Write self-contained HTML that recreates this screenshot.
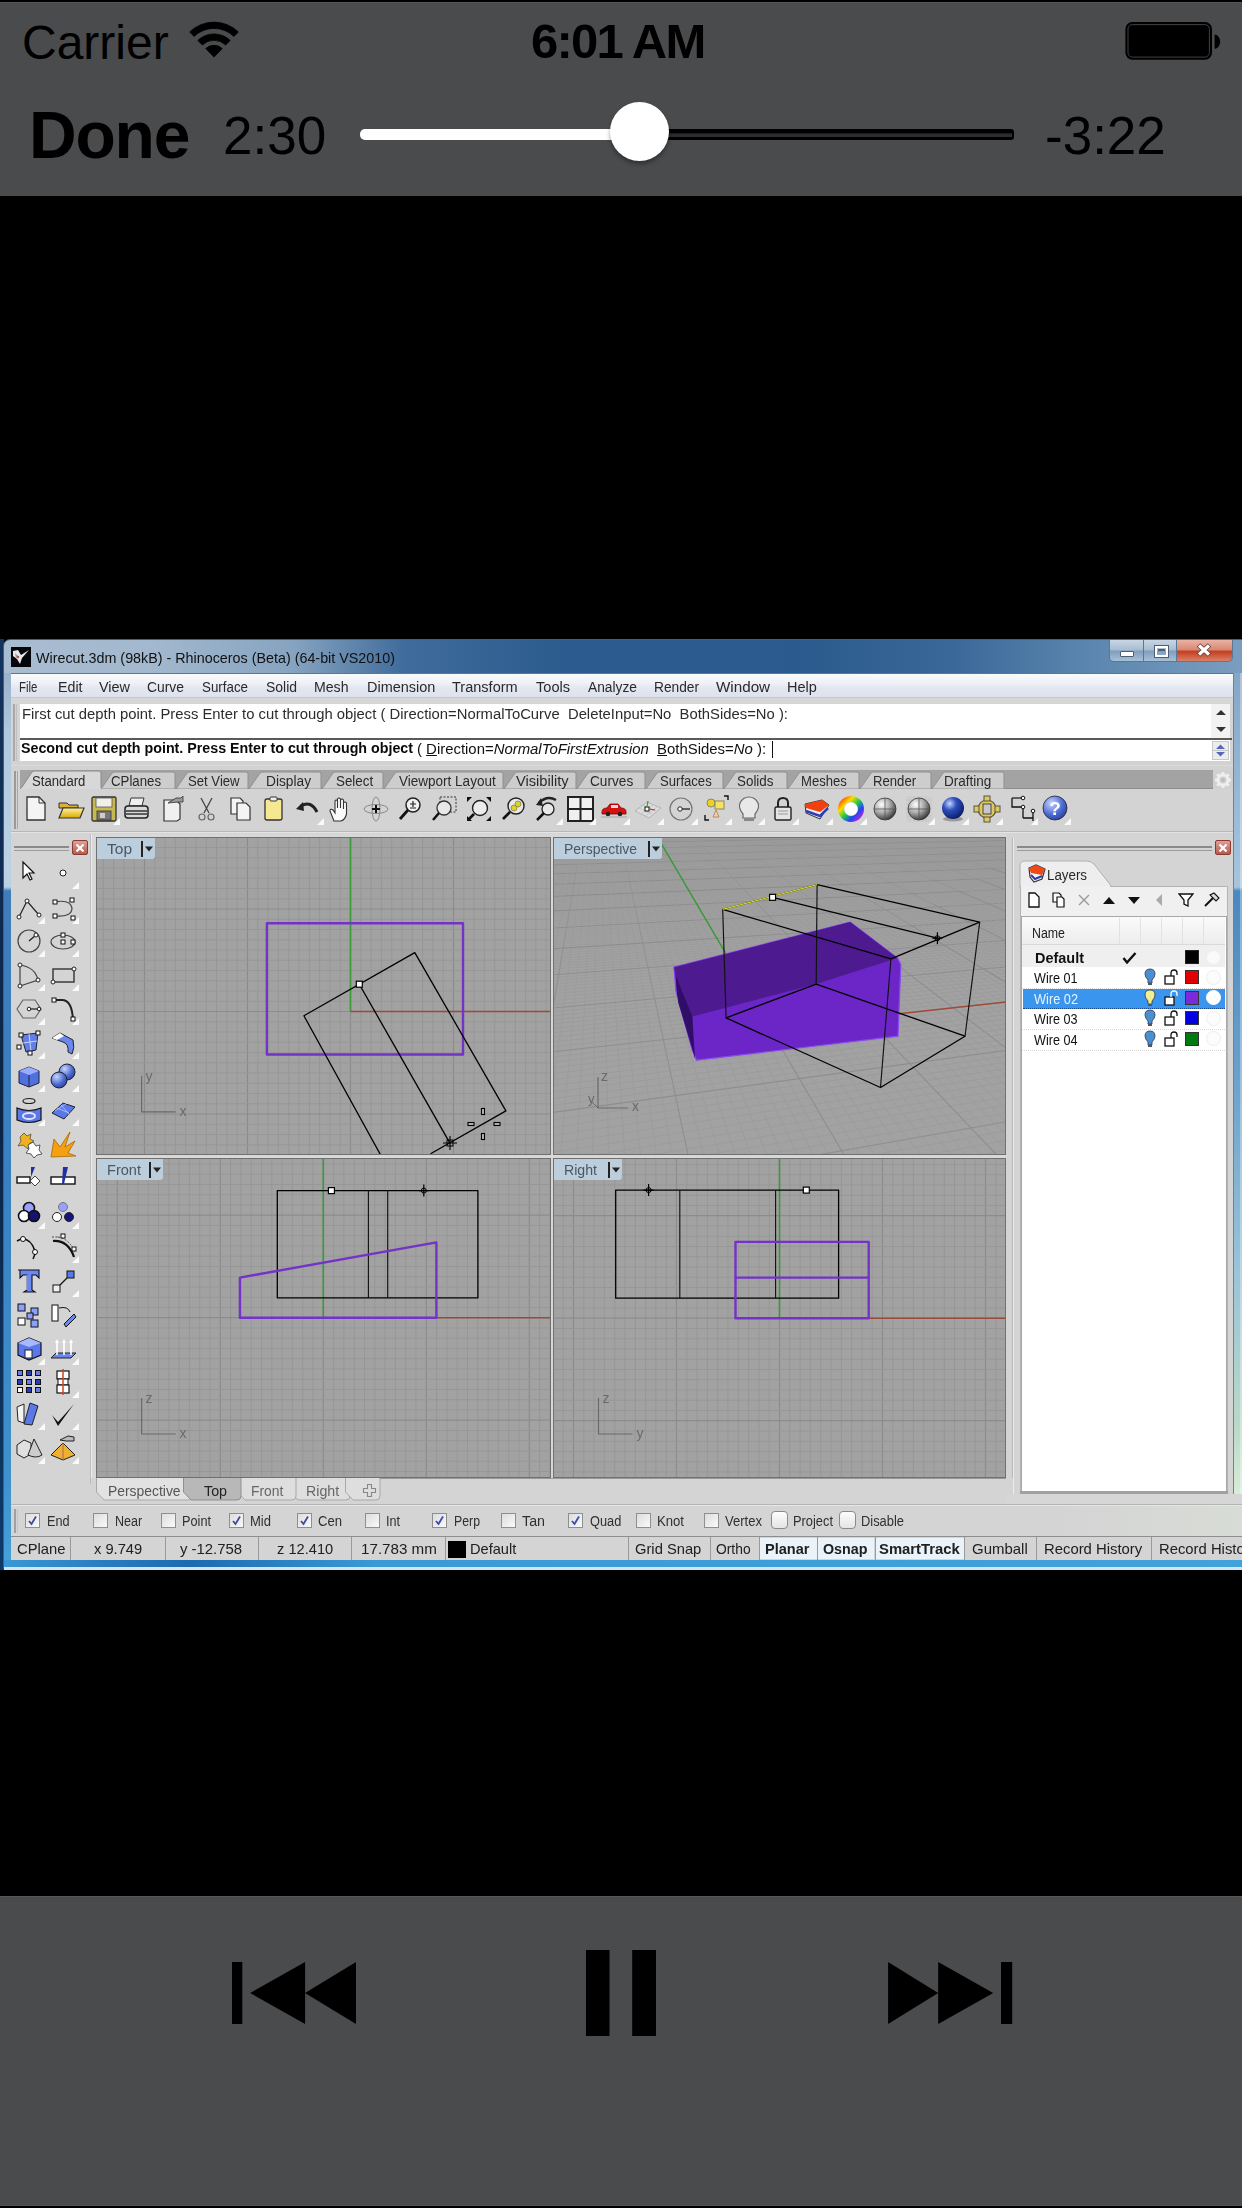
<!DOCTYPE html>
<html><head><meta charset="utf-8">
<style>
*{margin:0;padding:0;box-sizing:border-box}
html,body{width:1242px;height:2208px;overflow:hidden;background:#000;font-family:"Liberation Sans",sans-serif}
.a{position:absolute}
#top{position:absolute;left:0;top:2px;width:1242px;height:194px;background:#4a4b4d;border-top:1px solid #56575a}
#bot{position:absolute;left:0;top:1896px;width:1242px;height:310px;background:#4a4b4d;border-top:1px solid #56575a;border-bottom:1px solid #535456}
.ios{color:#000;white-space:nowrap;line-height:1}
#win{position:absolute;left:0;top:639px;width:1242px;height:931px;overflow:hidden}
.tt{font-size:15px;color:#111;white-space:nowrap;line-height:17px}
.mn{position:absolute;top:40px;font-size:14px;color:#111;white-space:nowrap;line-height:16px}
.t{white-space:nowrap}
</style></head><body>
<div id="top">
  <div class="a ios" style="left:22px;top:16px;font-size:48px">Carrier</div>
  <svg class="a" style="left:185px;top:15.3px" width="60" height="44" viewBox="0 0 60 44"><path d="M29 39.1 L20.80 30.61 A11.8 11.8 0 0 1 37.20 30.61 Z M12.88 22.41 A23.2 23.2 0 0 1 45.12 22.41 L40.67 27.02 A16.8 16.8 0 0 0 17.33 27.02 Z M4.69 13.92 A35 35 0 0 1 53.31 13.92 L48.94 18.45 A28.7 28.7 0 0 0 9.06 18.45 Z" fill="#000" stroke="#000" stroke-width="0.8" stroke-linejoin="round"/></svg>
  <div class="a ios" style="left:531px;top:14px;font-size:49px;font-weight:bold;letter-spacing:-1.8px">6:01 AM</div>
  <svg class="a" style="left:1124px;top:17px" width="100" height="42" viewBox="0 0 100 42">
    <rect x="1.4" y="2" width="86.6" height="37.7" rx="7" fill="#000"/>
    <rect x="4" y="4.6" width="81.4" height="32.5" rx="4.5" fill="none" stroke="#474747" stroke-width="0.9"/>
    <path d="M90.6 14.6 A5.6 7.15 0 0 1 90.6 28.9 Z" fill="#000"/>
  </svg>
  <div class="a ios" style="left:29px;top:99px;font-size:66px;font-weight:bold;letter-spacing:-1.2px">Done</div>
  <div class="a ios" style="left:223px;top:106px;font-size:53px">2:30</div>
  <div class="a" style="left:360px;top:126px;width:290px;height:11px;background:#fff;border-radius:5px"></div>
  <div class="a" style="left:630px;top:126px;width:384px;height:11px;background:#000;border-radius:0 3px 3px 0"></div>
  <div class="a" style="left:630px;top:129.5px;width:382px;height:4px;background:#2c2c2e;border-top:1px solid #1a1a1a"></div>
  <div class="a" style="left:610px;top:99px;width:59px;height:59px;border-radius:50%;background:#fff;box-shadow:0 3px 4px rgba(0,0,0,.35)"></div>
  <div class="a ios" style="left:1045px;top:106px;font-size:53px">-3:22</div>
</div>
<div id="bot">
  <svg class="a" style="left:0;top:-1px" width="1242" height="310" viewBox="0 1896 1242 310">
    <rect x="232" y="1962" width="10.3" height="62" fill="#000"/>
    <path d="M250.2 1993 L305.1 1962 L305.1 2024 Z M305 1993 L356 1962 L356 2024 Z" fill="#000"/>
    <rect x="586" y="1950" width="23.5" height="86" fill="#000"/>
    <rect x="632.2" y="1950" width="23.8" height="86" fill="#000"/>
    <path d="M888.1 1962 L938.2 1993 L888.1 2024 Z M938.2 1962 L993.2 1993 L938.2 2024 Z" fill="#000"/>
    <rect x="1001" y="1962" width="11.2" height="62" fill="#000"/>
  </svg>
</div>
<div class="a" style="left:0;top:0;width:1242px;height:2208px;filter:blur(0.3px)"><div class="a" style="left:0px;top:639px;width:4px;height:931px;background:linear-gradient(#14335e,#0b2448 50%,#0d3a6a);"></div>
<div class="a" style="left:3px;top:639px;width:1250px;height:930px;border-radius:7px 7px 0 0;background:linear-gradient(90deg,#a9bdd1 0,#a2b8ce 150px,#86a3c0 290px,#3f6c9b 400px,#2c5b8f 560px,#2b5a8e 800px,#3a6898 950px,#5a85ae 1080px,#7b9ec0 1242px);border:1px solid #40607e"></div>
<div class="a" style="left:4px;top:673px;width:8px;height:887px;background:linear-gradient(#9ab2ca 0,#b0c8de 60px,#bcd2e4 200px,#b8d0e4 214px,#3f7cba 218px,#3a80c0 500px,#3f90cc 800px,#46a0d8 887px);box-shadow:inset -1px 0 0 #7f9cb8"></div>
<div class="a" style="left:1233px;top:673px;width:10px;height:821px;background:linear-gradient(#86a6c6 0,#9cbcd8 150px,#a6c4dc 214px,#4a88c0 218px,#6aa0cc 400px,#9ac4d8 600px,#b8d8c8 750px,#d8ecd8 821px);box-shadow:inset -3px 0 0 rgba(255,255,255,.35)"></div>
<div class="a" style="left:1232px;top:673px;width:1.5px;height:821px;background:#6a849e;"></div>
<div class="a" style="left:4px;top:1560px;width:1240px;height:8px;background:linear-gradient(90deg,#3a98d4,#2a7cc0 8%,#1d6ab0 15%,#3a9ad6 30%,#42a2da 100%);"></div>
<div class="a" style="left:4px;top:1567px;width:1240px;height:3px;background:#cfe6f3;"></div>
<div class="a" style="left:0px;top:1570px;width:1242px;height:1px;background:#000;"></div>
<div class="a" style="left:11px;top:647px;width:20px;height:20px;background:#05050c;"></div>
<svg class="a" style="left:11px;top:647px;" width="20" height="20" viewBox="0 0 20 20"><path d="M2 4 L7 3 L10 8 L18 3 L11 11 L9 17 L6 12 L2 9 Z" fill="#e8e8e8"/><path d="M4 6 L7 9 L5 11 Z" fill="#999"/><circle cx="7" cy="10" r="1.2" fill="#c44"/></svg>
<div class="a t" style="left:36.0px;top:650.3px;font-size:15px;line-height:15px;color:#111;transform:scaleX(0.9548);transform-origin:0 0;">Wirecut.3dm (98kB) - Rhinoceros (Beta) (64-bit VS2010)</div>
<div class="a" style="left:1109px;top:640px;width:124px;height:22px;border:1px solid #5a7896;border-top:none;border-radius:0 0 5px 5px;overflow:hidden;background:#5a7896">
<div class="a" style="left:0;top:0;width:33px;height:21px;background:linear-gradient(#c8d6e4,#a8bcd0 48%,#7f9dbd 52%,#a6c0d8)"></div>
<div class="a" style="left:34px;top:0;width:32px;height:21px;background:linear-gradient(#c8d6e4,#a8bcd0 48%,#7f9dbd 52%,#a6c0d8)"></div>
<div class="a" style="left:67px;top:0;width:56px;height:21px;background:linear-gradient(#eab2a4,#d98a78 45%,#c4401f 55%,#d98068)"></div>
<div class="a" style="left:10px;top:11px;width:14px;height:6px;background:#fff;border:1px solid #4e5e70;border-radius:1px"></div>
<div class="a" style="left:45px;top:6px;width:13px;height:11px;border:2px solid #fff;box-shadow:0 0 0 1px #4e5e70;background:transparent"></div>
<div class="a" style="left:48px;top:9px;width:7px;height:2px;background:#4e5e70"></div>
</div>
<svg class="a" style="left:1196px;top:643px;" width="16" height="14" viewBox="0 0 16 14"><path d="M2.5 2 L13.5 12 M13.5 2 L2.5 12" stroke="#6a4038" stroke-width="5"/><path d="M3 2.5 L13 11.5 M13 2.5 L3 11.5" stroke="#fff" stroke-width="3.2"/></svg>
<div class="a" style="left:11px;top:673px;width:1222px;height:887px;background:#d4d4d4;"></div>
<div class="a" style="left:11px;top:673px;width:1222px;height:25px;background:linear-gradient(#f9fafc,#f0f2f7 35%,#e2e6f0 60%,#dde2ed);border-top:1px solid #5d7790"></div>
<div class="a" style="left:11px;top:697px;width:1222px;height:1px;background:#c4c8d0;"></div>
<div class="a t" style="left:19.1px;top:679.5px;font-size:14px;line-height:14px;color:#2a2a2a;transform:scaleX(0.8156);transform-origin:0 0;">File</div>
<div class="a t" style="left:58.0px;top:679.5px;font-size:14px;line-height:14px;color:#2a2a2a;transform:scaleX(1.0156);transform-origin:0 0;">Edit</div>
<div class="a t" style="left:98.5px;top:679.5px;font-size:14px;line-height:14px;color:#2a2a2a;transform:scaleX(1.0301);transform-origin:0 0;">View</div>
<div class="a t" style="left:146.5px;top:679.5px;font-size:14px;line-height:14px;color:#2a2a2a;transform:scaleX(0.9907);transform-origin:0 0;">Curve</div>
<div class="a t" style="left:201.5px;top:679.5px;font-size:14px;line-height:14px;color:#2a2a2a;transform:scaleX(0.9534);transform-origin:0 0;">Surface</div>
<div class="a t" style="left:265.5px;top:679.5px;font-size:14px;line-height:14px;color:#2a2a2a;transform:scaleX(0.9957);transform-origin:0 0;">Solid</div>
<div class="a t" style="left:314.0px;top:679.5px;font-size:14px;line-height:14px;color:#2a2a2a;transform:scaleX(1.0077);transform-origin:0 0;">Mesh</div>
<div class="a t" style="left:366.5px;top:679.5px;font-size:14px;line-height:14px;color:#2a2a2a;transform:scaleX(1.0342);transform-origin:0 0;">Dimension</div>
<div class="a t" style="left:452.3px;top:679.5px;font-size:14px;line-height:14px;color:#2a2a2a;transform:scaleX(1.0384);transform-origin:0 0;">Transform</div>
<div class="a t" style="left:536.1px;top:679.5px;font-size:14px;line-height:14px;color:#2a2a2a;transform:scaleX(1.0403);transform-origin:0 0;">Tools</div>
<div class="a t" style="left:587.5px;top:679.5px;font-size:14px;line-height:14px;color:#2a2a2a;transform:scaleX(0.9838);transform-origin:0 0;">Analyze</div>
<div class="a t" style="left:654.4px;top:679.5px;font-size:14px;line-height:14px;color:#2a2a2a;transform:scaleX(0.9822);transform-origin:0 0;">Render</div>
<div class="a t" style="left:715.8px;top:679.5px;font-size:14px;line-height:14px;color:#2a2a2a;transform:scaleX(1.0865);transform-origin:0 0;">Window</div>
<div class="a t" style="left:786.5px;top:679.5px;font-size:14px;line-height:14px;color:#2a2a2a;transform:scaleX(1.0349);transform-origin:0 0;">Help</div>
<div class="a" style="left:11px;top:698px;width:1222px;height:6px;background:#d6d6d6;"></div>
<div class="a" style="left:20px;top:704px;width:1210px;height:57px;background:#fff;"></div>
<div class="a" style="left:13px;top:704px;width:2px;height:57px;background:#a8a8a8;"></div>
<div class="a" style="left:16px;top:704px;width:1px;height:57px;background:#c0c0c0;"></div>
<div class="a" style="left:1211px;top:704px;width:19px;height:34px;background:#f2f2f2;"></div>
<svg class="a" style="left:1214px;top:707px;" width="14" height="28" viewBox="0 0 14 28"><path d="M2 8 L7 3 L12 8 Z" fill="#333"/><path d="M2 20 L12 20 L7 25 Z" fill="#333"/></svg>
<div class="a" style="left:20px;top:738px;width:1212px;height:1.5px;background:#5a5a5a;"></div>
<div class="a" style="left:1212px;top:741px;width:17px;height:19px;background:#ececec;border:1px solid #c8c8c8"></div>
<svg class="a" style="left:1212px;top:741px;" width="17" height="19" viewBox="0 0 17 19"><path d="M4 8 L8.5 3.5 L13 8 Z" fill="#5566bb"/><path d="M4 11 L13 11 L8.5 15.5 Z" fill="#5566bb"/><path d="M1 9.5 H16" stroke="#c8c8c8"/></svg>
<div class="a t" style="left:22.0px;top:706.7px;font-size:14px;line-height:14px;color:#2c2c2c;transform:scaleX(1.0590);transform-origin:0 0;">First cut depth point. Press Enter to cut through object ( Direction=NormalToCurve&nbsp; DeleteInput=No&nbsp; BothSides=No ):</div>
<div class="a t" style="left:21.0px;top:741.4px;font-size:14px;line-height:14px;color:#0a0a0a;font-weight:bold;transform:scaleX(1.0181);transform-origin:0 0;">Second cut depth point. Press Enter to cut through object</div>
<div class="a t" style="left:417px;top:741.5px;font-size:14px;line-height:14px;color:#111;transform:scaleX(1.0646);transform-origin:0 0">( <u>D</u>irection=<i>NormalToFirstExtrusion</i>&nbsp; <u>B</u>othSides=<i>No</i> ):</div>
<div class="a" style="left:772px;top:741px;width:1.3px;height:17px;background:#111;"></div>
<div class="a" style="left:11px;top:761px;width:1222px;height:9px;background:#d2d2d2;"></div>
<div class="a" style="left:11px;top:765px;width:1222px;height:1px;background:#dadada;"></div>
<div class="a" style="left:20px;top:770px;width:1193px;height:19px;background:#a3a3a3;"></div>
<div class="a" style="left:20px;top:788px;width:1213px;height:1.5px;background:#8c8c8c;"></div>
<div class="a" style="left:1213px;top:770px;width:20px;height:19px;background:#d0d0d0;"></div>
<svg class="a" style="left:1214px;top:771px;" width="18" height="18" viewBox="0 0 18 18"><g fill="none" stroke="#eee" stroke-width="3"><circle cx="9" cy="9" r="5"/></g><g stroke="#eee" stroke-width="3"><path d="M9 1V4M9 14V17M1 9H4M14 9H17M3.3 3.3L5.5 5.5M12.5 12.5L14.7 14.7M3.3 14.7L5.5 12.5M12.5 5.5L14.7 3.3"/></g><circle cx="9" cy="9" r="2" fill="#bbb"/></svg>
<svg class="a" style="left:20px;top:770px" width="85" height="21" viewBox="0 0 85 21"><path d="M0 21 L0 20 L12 2 Q13 1 15 1 L79 1 Q81 1 81 3 L81 21 Z" fill="#d8d8d8" stroke="#8a8a8a" stroke-width="1"/><rect x="1" y="18" width="80" height="3" fill="#d8d8d8"/></svg>
<svg class="a" style="left:101px;top:771px" width="77" height="18" viewBox="0 0 77 18"><path d="M0 18 L11 2 Q12 1 14 1 L72 1 Q74 1 74 3 L74 18 Z" fill="#cdcdcd" stroke="#8f8f8f" stroke-width="1"/></svg>
<svg class="a" style="left:176px;top:771px" width="75" height="18" viewBox="0 0 75 18"><path d="M0 18 L11 2 Q12 1 14 1 L70 1 Q72 1 72 3 L72 18 Z" fill="#cdcdcd" stroke="#8f8f8f" stroke-width="1"/></svg>
<svg class="a" style="left:249px;top:771px" width="75" height="18" viewBox="0 0 75 18"><path d="M0 18 L11 2 Q12 1 14 1 L70 1 Q72 1 72 3 L72 18 Z" fill="#cdcdcd" stroke="#8f8f8f" stroke-width="1"/></svg>
<svg class="a" style="left:322px;top:771px" width="64" height="18" viewBox="0 0 64 18"><path d="M0 18 L11 2 Q12 1 14 1 L59 1 Q61 1 61 3 L61 18 Z" fill="#cdcdcd" stroke="#8f8f8f" stroke-width="1"/></svg>
<svg class="a" style="left:384px;top:771px" width="122" height="18" viewBox="0 0 122 18"><path d="M0 18 L11 2 Q12 1 14 1 L117 1 Q119 1 119 3 L119 18 Z" fill="#cdcdcd" stroke="#8f8f8f" stroke-width="1"/></svg>
<svg class="a" style="left:504px;top:771px" width="75" height="18" viewBox="0 0 75 18"><path d="M0 18 L11 2 Q12 1 14 1 L70 1 Q72 1 72 3 L72 18 Z" fill="#cdcdcd" stroke="#8f8f8f" stroke-width="1"/></svg>
<svg class="a" style="left:577px;top:771px" width="71" height="18" viewBox="0 0 71 18"><path d="M0 18 L11 2 Q12 1 14 1 L66 1 Q68 1 68 3 L68 18 Z" fill="#cdcdcd" stroke="#8f8f8f" stroke-width="1"/></svg>
<svg class="a" style="left:646px;top:771px" width="80" height="18" viewBox="0 0 80 18"><path d="M0 18 L11 2 Q12 1 14 1 L75 1 Q77 1 77 3 L77 18 Z" fill="#cdcdcd" stroke="#8f8f8f" stroke-width="1"/></svg>
<svg class="a" style="left:724px;top:771px" width="66" height="18" viewBox="0 0 66 18"><path d="M0 18 L11 2 Q12 1 14 1 L61 1 Q63 1 63 3 L63 18 Z" fill="#cdcdcd" stroke="#8f8f8f" stroke-width="1"/></svg>
<svg class="a" style="left:788px;top:771px" width="74" height="18" viewBox="0 0 74 18"><path d="M0 18 L11 2 Q12 1 14 1 L69 1 Q71 1 71 3 L71 18 Z" fill="#cdcdcd" stroke="#8f8f8f" stroke-width="1"/></svg>
<svg class="a" style="left:860px;top:771px" width="74" height="18" viewBox="0 0 74 18"><path d="M0 18 L11 2 Q12 1 14 1 L69 1 Q71 1 71 3 L71 18 Z" fill="#cdcdcd" stroke="#8f8f8f" stroke-width="1"/></svg>
<svg class="a" style="left:932px;top:771px" width="75" height="18" viewBox="0 0 75 18"><path d="M0 18 L11 2 Q12 1 14 1 L70 1 Q72 1 72 3 L72 18 Z" fill="#cdcdcd" stroke="#8f8f8f" stroke-width="1"/></svg>
<div class="a t" style="left:32.3px;top:774.1px;font-size:14px;line-height:14px;color:#2a2a2a;transform:scaleX(0.9398);transform-origin:0 0;">Standard</div>
<div class="a t" style="left:111.1px;top:774.1px;font-size:14px;line-height:14px;color:#2a2a2a;transform:scaleX(0.9467);transform-origin:0 0;">CPlanes</div>
<div class="a t" style="left:187.9px;top:774.1px;font-size:14px;line-height:14px;color:#2a2a2a;transform:scaleX(0.9382);transform-origin:0 0;">Set View</div>
<div class="a t" style="left:265.5px;top:774.1px;font-size:14px;line-height:14px;color:#2a2a2a;transform:scaleX(0.9803);transform-origin:0 0;">Display</div>
<div class="a t" style="left:336.0px;top:774.1px;font-size:14px;line-height:14px;color:#2a2a2a;transform:scaleX(0.9560);transform-origin:0 0;">Select</div>
<div class="a t" style="left:398.5px;top:774.1px;font-size:14px;line-height:14px;color:#2a2a2a;transform:scaleX(0.9656);transform-origin:0 0;">Viewport Layout</div>
<div class="a t" style="left:515.5px;top:774.1px;font-size:14px;line-height:14px;color:#2a2a2a;transform:scaleX(1.0474);transform-origin:0 0;">Visibility</div>
<div class="a t" style="left:590.0px;top:774.1px;font-size:14px;line-height:14px;color:#2a2a2a;transform:scaleX(0.9742);transform-origin:0 0;">Curves</div>
<div class="a t" style="left:660.1px;top:774.1px;font-size:14px;line-height:14px;color:#2a2a2a;transform:scaleX(0.9358);transform-origin:0 0;">Surfaces</div>
<div class="a t" style="left:737.2px;top:774.1px;font-size:14px;line-height:14px;color:#2a2a2a;transform:scaleX(0.9572);transform-origin:0 0;">Solids</div>
<div class="a t" style="left:800.5px;top:774.1px;font-size:14px;line-height:14px;color:#2a2a2a;transform:scaleX(0.9343);transform-origin:0 0;">Meshes</div>
<div class="a t" style="left:873.2px;top:774.1px;font-size:14px;line-height:14px;color:#2a2a2a;transform:scaleX(0.9386);transform-origin:0 0;">Render</div>
<div class="a t" style="left:943.5px;top:774.1px;font-size:14px;line-height:14px;color:#2a2a2a;transform:scaleX(0.9669);transform-origin:0 0;">Drafting</div>
<div class="a" style="left:11px;top:789px;width:1222px;height:42px;background:#d3d3d3;"></div>
<div class="a" style="left:11px;top:831px;width:1222px;height:1px;background:#b8b8b8;"></div>
<div class="a" style="left:11px;top:832px;width:1222px;height:1px;background:#e4e4e4;"></div>
<div class="a" style="left:14px;top:771px;width:1.5px;height:58px;background:#9a9a9a;"></div>
<div class="a" style="left:16.5px;top:771px;width:1.5px;height:58px;background:#a8a8a8;"></div>
<svg class="a" style="left:0;top:0" width="0" height="0"><defs>
<linearGradient id="gy" x1="0" y1="0" x2="0" y2="1"><stop offset="0" stop-color="#fff3a0"/><stop offset="1" stop-color="#d9a800"/></linearGradient>
<radialGradient id="gs" cx="0.35" cy="0.3" r="0.75"><stop offset="0" stop-color="#fff"/><stop offset="0.5" stop-color="#aaa"/><stop offset="1" stop-color="#333"/></radialGradient>
<radialGradient id="bs" cx="0.35" cy="0.3" r="0.75"><stop offset="0" stop-color="#c8d8ff"/><stop offset="0.4" stop-color="#3050c0"/><stop offset="1" stop-color="#0a1a60"/></radialGradient>
<radialGradient id="hs" cx="0.35" cy="0.3" r="0.8"><stop offset="0" stop-color="#c8d4ff"/><stop offset="0.6" stop-color="#4a6ad0"/><stop offset="1" stop-color="#2a3a90"/></radialGradient>
<linearGradient id="bl" x1="0" y1="0" x2="1" y2="1"><stop offset="0" stop-color="#a8b8ff"/><stop offset="1" stop-color="#3a50c8"/></linearGradient>
</defs></svg>
<svg class="a" style="left:21.0px;top:794.0px;" width="30" height="30" viewBox="0 0 30 30"><path d="M6 3 H18 L24 9 V26 H6 Z" fill="#f4f4f4" stroke="#333" stroke-width="1.3"/><path d="M18 3 V9 H24" fill="none" stroke="#333" stroke-width="1"/></svg>
<svg class="a" style="left:55.5px;top:794.0px;" width="30" height="30" viewBox="0 0 30 30"><path d="M3 9 H11 L13 11 H22 V14 H3 Z" fill="#e0b030" stroke="#333" stroke-width="1"/><path d="M3 24 L7 14 H28 L24 24 Z" fill="url(#gy)" stroke="#333" stroke-width="1.2"/></svg>
<svg class="a" style="left:88.5px;top:794.0px;" width="30" height="30" viewBox="0 0 30 30"><rect x="3" y="3" width="24" height="24" rx="1.5" fill="#c8b850" stroke="#333" stroke-width="1.3"/><rect x="7" y="4" width="16" height="9" fill="#f0f0e8" stroke="#555" stroke-width="0.8"/><rect x="8" y="17" width="14" height="9" fill="#777" stroke="#333" stroke-width="0.8"/><rect x="11" y="19" width="5" height="5" fill="#ccc"/></svg>
<svg class="a" style="left:112.5px;top:818px;" width="7" height="7" viewBox="0 0 7 7"><path d="M7 0 L7 7 L0 7 Z" fill="#fafafa"/></svg>
<svg class="a" style="left:122.0px;top:794.0px;" width="30" height="30" viewBox="0 0 30 30"><path d="M9 4 H22 L20 12 H7 Z" fill="#f0f0f0" stroke="#333" stroke-width="1"/><rect x="3" y="12" width="23" height="12" rx="3" fill="#d8d8d8" stroke="#222" stroke-width="1.5"/><path d="M4 17 H25 M4 20 H25" stroke="#333" stroke-width="1.3"/></svg>
<svg class="a" style="left:159.0px;top:794.0px;" width="30" height="30" viewBox="0 0 30 30"><path d="M5 6 H17 L21 10 V25 L18 27 H5 Z" fill="#f0f0f0" stroke="#333" stroke-width="1.2"/><path d="M9 9 L17 4 L22 4 L24 2 V8 L20 8 Z" fill="#999" stroke="#333" stroke-width="0.8"/></svg>
<svg class="a" style="left:191.5px;top:794.0px;" width="30" height="30" viewBox="0 0 30 30"><path d="M9 4 L17 19 M20 4 L12 19" stroke="#444" stroke-width="1.3"/><circle cx="10" cy="23" r="3" fill="none" stroke="#666" stroke-width="1.2"/><circle cx="19" cy="23" r="3" fill="none" stroke="#666" stroke-width="1.2"/></svg>
<svg class="a" style="left:225.5px;top:794.0px;" width="30" height="30" viewBox="0 0 30 30"><path d="M5 4 H14 L17 7 V20 H5 Z" fill="#f4f4f4" stroke="#333" stroke-width="1.2"/><path d="M11 9 H20 L24 13 V26 H11 Z" fill="#f4f4f4" stroke="#333" stroke-width="1.2"/></svg>
<svg class="a" style="left:258.5px;top:794.0px;" width="30" height="30" viewBox="0 0 30 30"><rect x="6" y="5" width="17" height="21" rx="2" fill="#f6e890" stroke="#333" stroke-width="1.3"/><rect x="11" y="3" width="7" height="4" rx="1" fill="#eee" stroke="#333" stroke-width="1"/></svg>
<svg class="a" style="left:293.0px;top:794.0px;" width="30" height="30" viewBox="0 0 30 30"><path d="M24 18 Q18 6 8 12" fill="none" stroke="#222" stroke-width="3"/><path d="M3 15 L10 8 L11 17 Z" fill="#222"/></svg>
<svg class="a" style="left:317px;top:818px;" width="7" height="7" viewBox="0 0 7 7"><path d="M7 0 L7 7 L0 7 Z" fill="#fafafa"/></svg>
<svg class="a" style="left:325.0px;top:794.0px;" width="30" height="30" viewBox="0 0 30 30"><path d="M9 27 L5 17 Q5 14 8 16 L10 19 V7 Q11 5 12.5 7 V14 V5 Q14 3 15.5 5 V14 V6 Q17 4 18.5 6 V15 V9 Q20 7 21.5 9 V20 Q20 26 16 27 Z" fill="#fafafa" stroke="#333" stroke-width="1.1"/></svg>
<svg class="a" style="left:361.0px;top:794.0px;" width="30" height="30" viewBox="0 0 30 30"><ellipse cx="15" cy="15" rx="12" ry="4.5" fill="none" stroke="#888" stroke-width="1"/><ellipse cx="15" cy="15" rx="4" ry="12" fill="none" stroke="#888" stroke-width="1"/><path d="M15 11 V19 M11 15 H19" stroke="#111" stroke-width="2"/></svg>
<svg class="a" style="left:395.5px;top:794.0px;" width="30" height="30" viewBox="0 0 30 30"><circle cx="17" cy="11" r="7" fill="#f0f0f0" stroke="#222" stroke-width="1.5"/><path d="M12 16 L4 25" stroke="#111" stroke-width="2.8"/><path d="M14 10 H20 M17 7 V13 M14 14 H20" stroke="#222" stroke-width="1.2"/></svg>
<svg class="a" style="left:429.5px;top:794.0px;" width="30" height="30" viewBox="0 0 30 30"><rect x="10" y="3" width="16" height="15" fill="none" stroke="#333" stroke-width="1" stroke-dasharray="2 1.5"/><circle cx="14" cy="14" r="7" fill="#e8e8e8" stroke="#333" stroke-width="1.3"/><path d="M9 19 L3 26" stroke="#111" stroke-width="2.5"/></svg>
<svg class="a" style="left:463.5px;top:794.0px;" width="30" height="30" viewBox="0 0 30 30"><circle cx="16" cy="14" r="7.5" fill="#ececec" stroke="#222" stroke-width="1.4"/><path d="M10 20 L5 25" stroke="#111" stroke-width="2.6"/><path d="M3 3 H8 L3 8 Z M27 3 V8 L22 3 Z M3 27 V22 L8 27 Z M27 27 H22 L27 22 Z" fill="#111"/></svg>
<svg class="a" style="left:498.5px;top:794.0px;" width="30" height="30" viewBox="0 0 30 30"><circle cx="17" cy="12" r="8" fill="#e8e8e8" stroke="#222" stroke-width="1.4"/><circle cx="15" cy="14" r="3" fill="#e0d020" stroke="#666" stroke-width="0.6"/><circle cx="19" cy="10" r="3" fill="#e0d020" stroke="#666" stroke-width="0.6"/><path d="M11 18 L4 25" stroke="#111" stroke-width="2.6"/></svg>
<svg class="a" style="left:531.5px;top:794.0px;" width="30" height="30" viewBox="0 0 30 30"><path d="M7 9 Q15 1 24 6" fill="none" stroke="#222" stroke-width="2.5"/><path d="M4 11 L9 4 L11 12 Z" fill="#222"/><circle cx="16" cy="15" r="6" fill="#e8e8e8" stroke="#222" stroke-width="1.3"/><path d="M12 19 L5 26" stroke="#111" stroke-width="2.5"/></svg>
<svg class="a" style="left:555.5px;top:818px;" width="7" height="7" viewBox="0 0 7 7"><path d="M7 0 L7 7 L0 7 Z" fill="#fafafa"/></svg>
<svg class="a" style="left:565.0px;top:794.0px;" width="30" height="30" viewBox="0 0 30 30"><rect x="3" y="3" width="25" height="24" fill="#f0f0f0" stroke="#222" stroke-width="2"/><path d="M15.5 3 V27 M3 15 H28" stroke="#222" stroke-width="2"/></svg>
<svg class="a" style="left:589px;top:818px;" width="7" height="7" viewBox="0 0 7 7"><path d="M7 0 L7 7 L0 7 Z" fill="#fafafa"/></svg>
<svg class="a" style="left:598.5px;top:794.0px;" width="30" height="30" viewBox="0 0 30 30"><path d="M3 18 Q3 14 8 14 L11 10 H19 L22 14 Q27 14 27 18 V20 H3 Z" fill="#d81010" stroke="#800" stroke-width="0.8"/><rect x="12" y="11" width="7" height="3" fill="#ddd"/><circle cx="9" cy="20" r="2.3" fill="#222"/><circle cx="21" cy="20" r="2.3" fill="#222"/><path d="M2 23 H28" stroke="#999" stroke-width="0.8"/></svg>
<svg class="a" style="left:622.5px;top:818px;" width="7" height="7" viewBox="0 0 7 7"><path d="M7 0 L7 7 L0 7 Z" fill="#fafafa"/></svg>
<svg class="a" style="left:632.5px;top:794.0px;" width="30" height="30" viewBox="0 0 30 30"><path d="M2 17 L14 8 L28 14 L16 24 Z" fill="#ddd" stroke="#aaa" stroke-width="0.8"/><path d="M6 14 L19 20 M10 11 L23 17 M8 20 L20 11 M12 22 L24 13" stroke="#bbb" stroke-width="0.7"/><rect x="12" y="13" width="4" height="4" fill="#fff" stroke="#111"/><path d="M16 15 L22 16" stroke="#d22" stroke-width="1.2"/><path d="M14 13 L15 7" stroke="#2a2" stroke-width="1.2"/></svg>
<svg class="a" style="left:656.5px;top:818px;" width="7" height="7" viewBox="0 0 7 7"><path d="M7 0 L7 7 L0 7 Z" fill="#fafafa"/></svg>
<svg class="a" style="left:666.5px;top:794.0px;" width="30" height="30" viewBox="0 0 30 30"><circle cx="14" cy="15" r="11" fill="none" stroke="#777" stroke-width="1.2"/><circle cx="13" cy="15" r="2.2" fill="#fff" stroke="#222" stroke-width="1"/><path d="M15 15 H23" stroke="#222" stroke-width="1.3"/></svg>
<svg class="a" style="left:690.5px;top:818px;" width="7" height="7" viewBox="0 0 7 7"><path d="M7 0 L7 7 L0 7 Z" fill="#fafafa"/></svg>
<svg class="a" style="left:700.5px;top:794.0px;" width="30" height="30" viewBox="0 0 30 30"><circle cx="10" cy="9" r="4" fill="#f0d020" stroke="#886"/><rect x="14" y="7" width="9" height="8" fill="#f8e060" stroke="#886"/><path d="M12 23 L15 16 L18 23 Z" fill="#f4d0a0" stroke="#b86"/><path d="M4 21 V26 H8 M23 2 H27 V6" fill="none" stroke="#111" stroke-width="1.4"/></svg>
<svg class="a" style="left:724.5px;top:818px;" width="7" height="7" viewBox="0 0 7 7"><path d="M7 0 L7 7 L0 7 Z" fill="#fafafa"/></svg>
<svg class="a" style="left:734.0px;top:794.0px;" width="30" height="30" viewBox="0 0 30 30"><path d="M9 20 Q4 14 6 9 Q9 3 15 3 Q21 3 24 9 Q26 14 21 20 V24 H9 Z" fill="#e8e8e8" stroke="#666" stroke-width="1.2"/><rect x="10" y="24" width="10" height="3" fill="#888"/></svg>
<svg class="a" style="left:758px;top:818px;" width="7" height="7" viewBox="0 0 7 7"><path d="M7 0 L7 7 L0 7 Z" fill="#fafafa"/></svg>
<svg class="a" style="left:768.0px;top:794.0px;" width="30" height="30" viewBox="0 0 30 30"><path d="M10 13 V9 Q10 4 15 4 Q20 4 20 9 V13" fill="none" stroke="#222" stroke-width="2"/><rect x="7" y="13" width="16" height="13" rx="1.5" fill="#e4e4e4" stroke="#222" stroke-width="1.4"/><path d="M10 17 H20 M10 20 H20" stroke="#999"/></svg>
<svg class="a" style="left:792px;top:818px;" width="7" height="7" viewBox="0 0 7 7"><path d="M7 0 L7 7 L0 7 Z" fill="#fafafa"/></svg>
<svg class="a" style="left:802.0px;top:794.0px;" width="30" height="30" viewBox="0 0 30 30"><path d="M3 10 L20 6 L27 11 L18 25 L4 19 Z" fill="#f0f0f0" stroke="#333"/><path d="M3 10 L20 6 L27 11 L18 18 L4 14 Z" fill="#f04010"/><path d="M4 17 L18 22 L26 14" fill="none" stroke="#3040b0" stroke-width="2.5"/></svg>
<svg class="a" style="left:826px;top:818px;" width="7" height="7" viewBox="0 0 7 7"><path d="M7 0 L7 7 L0 7 Z" fill="#fafafa"/></svg>
<svg class="a" style="left:836.0px;top:794.0px;" width="30" height="30" viewBox="0 0 30 30"><circle cx="15" cy="15" r="10" fill="none" stroke="url(#cw)" stroke-width="6"/><defs><linearGradient id="cw" x1="0" y1="0" x2="1" y2="1"><stop offset="0" stop-color="#f40"/><stop offset="0.25" stop-color="#fd0"/><stop offset="0.5" stop-color="#2c4"/><stop offset="0.75" stop-color="#24f"/><stop offset="1" stop-color="#c2c"/></linearGradient></defs><circle cx="15" cy="15" r="6.5" fill="#fff"/></svg>
<svg class="a" style="left:860px;top:818px;" width="7" height="7" viewBox="0 0 7 7"><path d="M7 0 L7 7 L0 7 Z" fill="#fafafa"/></svg>
<svg class="a" style="left:870.0px;top:794.0px;" width="30" height="30" viewBox="0 0 30 30"><circle cx="15" cy="15" r="11" fill="url(#gs)" stroke="#333" stroke-width="0.8"/><path d="M4 15 H26 M15 4 V26" stroke="#555" stroke-width="0.8"/></svg>
<svg class="a" style="left:904.0px;top:794.0px;" width="30" height="30" viewBox="0 0 30 30"><rect x="2" y="2" width="26" height="26" fill="#cfcfcf"/><path d="M2 6H28M2 10H28M2 14H28M2 18H28M2 22H28M6 2V28M10 2V28M14 2V28M18 2V28M22 2V28" stroke="#bbb" stroke-width="0.5"/><circle cx="15" cy="15" r="11" fill="url(#gs)" stroke="#333" stroke-width="0.8"/><path d="M4 15 H26 M15 4 V26" stroke="#555" stroke-width="0.8"/></svg>
<svg class="a" style="left:928px;top:818px;" width="7" height="7" viewBox="0 0 7 7"><path d="M7 0 L7 7 L0 7 Z" fill="#fafafa"/></svg>
<svg class="a" style="left:938.0px;top:794.0px;" width="30" height="30" viewBox="0 0 30 30"><ellipse cx="15" cy="25" rx="10" ry="2.5" fill="#999"/><circle cx="15" cy="14" r="11" fill="url(#bs)"/></svg>
<svg class="a" style="left:962px;top:818px;" width="7" height="7" viewBox="0 0 7 7"><path d="M7 0 L7 7 L0 7 Z" fill="#fafafa"/></svg>
<svg class="a" style="left:972.0px;top:794.0px;" width="30" height="30" viewBox="0 0 30 30"><g transform="translate(15,15)"><circle r="9" fill="#e0c860" stroke="#554" stroke-width="1.2"/><g fill="#e0c860" stroke="#554" stroke-width="1"><rect x="-3" y="-13" width="6" height="5"/><rect x="-3" y="8" width="6" height="5"/><rect x="-13" y="-3" width="5" height="6"/><rect x="8" y="-3" width="5" height="6"/></g><rect x="-4" y="-5" width="8" height="10" fill="#c8c8c8" stroke="#444"/></g></svg>
<svg class="a" style="left:996px;top:818px;" width="7" height="7" viewBox="0 0 7 7"><path d="M7 0 L7 7 L0 7 Z" fill="#fafafa"/></svg>
<svg class="a" style="left:1006.5px;top:794.0px;" width="30" height="30" viewBox="0 0 30 30"><path d="M5 4 V13 H16 V24 M16 24 H26 M26 17 V27" fill="none" stroke="#111" stroke-width="1.3"/><circle cx="16" cy="4" r="1.8" fill="#fff" stroke="#111"/><circle cx="16" cy="13" r="1.8" fill="#fff" stroke="#111"/><circle cx="26" cy="17" r="1.8" fill="#fff" stroke="#111"/><path d="M5 4 H15" stroke="#111" stroke-width="1.2"/></svg>
<svg class="a" style="left:1030.5px;top:818px;" width="7" height="7" viewBox="0 0 7 7"><path d="M7 0 L7 7 L0 7 Z" fill="#fafafa"/></svg>
<svg class="a" style="left:1040.0px;top:794.0px;" width="30" height="30" viewBox="0 0 30 30"><circle cx="15" cy="14" r="12" fill="url(#hs)" stroke="#223" stroke-width="0.8"/><text x="15" y="21" text-anchor="middle" font-family="Liberation Sans" font-weight="bold" font-size="19" fill="#fff">?</text></svg>
<svg class="a" style="left:1064px;top:818px;" width="7" height="7" viewBox="0 0 7 7"><path d="M7 0 L7 7 L0 7 Z" fill="#fafafa"/></svg>
<div class="a" style="left:91px;top:834px;width:922px;height:650px;background:#d8d8d8;"></div>
<svg class="a" style="left:96px;top:837px" width="455" height="318" viewBox="0 0 455 318"><rect width="455" height="318" fill="#a2a2a2"/><path d="M7.3 0V318" stroke="#979797" stroke-width="1"/><path d="M17.6 0V318" stroke="#979797" stroke-width="1"/><path d="M27.9 0V318" stroke="#979797" stroke-width="1"/><path d="M38.2 0V318" stroke="#979797" stroke-width="1"/><path d="M48.5 0V318" stroke="#8c8c8c" stroke-width="1.2"/><path d="M58.8 0V318" stroke="#979797" stroke-width="1"/><path d="M69.1 0V318" stroke="#979797" stroke-width="1"/><path d="M79.4 0V318" stroke="#979797" stroke-width="1"/><path d="M89.7 0V318" stroke="#979797" stroke-width="1"/><path d="M100.0 0V318" stroke="#979797" stroke-width="1"/><path d="M110.3 0V318" stroke="#979797" stroke-width="1"/><path d="M120.6 0V318" stroke="#979797" stroke-width="1"/><path d="M130.9 0V318" stroke="#979797" stroke-width="1"/><path d="M141.2 0V318" stroke="#979797" stroke-width="1"/><path d="M151.5 0V318" stroke="#8c8c8c" stroke-width="1.2"/><path d="M161.8 0V318" stroke="#979797" stroke-width="1"/><path d="M172.1 0V318" stroke="#979797" stroke-width="1"/><path d="M182.4 0V318" stroke="#979797" stroke-width="1"/><path d="M192.7 0V318" stroke="#979797" stroke-width="1"/><path d="M203.0 0V318" stroke="#979797" stroke-width="1"/><path d="M213.3 0V318" stroke="#979797" stroke-width="1"/><path d="M223.6 0V318" stroke="#979797" stroke-width="1"/><path d="M233.9 0V318" stroke="#979797" stroke-width="1"/><path d="M244.2 0V318" stroke="#979797" stroke-width="1"/><path d="M254.5 0V318" stroke="#8c8c8c" stroke-width="1.2"/><path d="M264.8 0V318" stroke="#979797" stroke-width="1"/><path d="M275.1 0V318" stroke="#979797" stroke-width="1"/><path d="M285.4 0V318" stroke="#979797" stroke-width="1"/><path d="M295.7 0V318" stroke="#979797" stroke-width="1"/><path d="M306.0 0V318" stroke="#979797" stroke-width="1"/><path d="M316.3 0V318" stroke="#979797" stroke-width="1"/><path d="M326.6 0V318" stroke="#979797" stroke-width="1"/><path d="M336.9 0V318" stroke="#979797" stroke-width="1"/><path d="M347.2 0V318" stroke="#979797" stroke-width="1"/><path d="M357.5 0V318" stroke="#8c8c8c" stroke-width="1.2"/><path d="M367.8 0V318" stroke="#979797" stroke-width="1"/><path d="M378.1 0V318" stroke="#979797" stroke-width="1"/><path d="M388.4 0V318" stroke="#979797" stroke-width="1"/><path d="M398.7 0V318" stroke="#979797" stroke-width="1"/><path d="M409.0 0V318" stroke="#979797" stroke-width="1"/><path d="M419.3 0V318" stroke="#979797" stroke-width="1"/><path d="M429.6 0V318" stroke="#979797" stroke-width="1"/><path d="M439.9 0V318" stroke="#979797" stroke-width="1"/><path d="M450.2 0V318" stroke="#979797" stroke-width="1"/><path d="M0 0.2H455" stroke="#979797" stroke-width="1"/><path d="M0 10.5H455" stroke="#979797" stroke-width="1"/><path d="M0 20.8H455" stroke="#979797" stroke-width="1"/><path d="M0 31.0H455" stroke="#979797" stroke-width="1"/><path d="M0 41.2H455" stroke="#979797" stroke-width="1"/><path d="M0 51.5H455" stroke="#979797" stroke-width="1"/><path d="M0 61.8H455" stroke="#979797" stroke-width="1"/><path d="M0 72.0H455" stroke="#8c8c8c" stroke-width="1.2"/><path d="M0 82.2H455" stroke="#979797" stroke-width="1"/><path d="M0 92.5H455" stroke="#979797" stroke-width="1"/><path d="M0 102.8H455" stroke="#979797" stroke-width="1"/><path d="M0 113.0H455" stroke="#979797" stroke-width="1"/><path d="M0 123.2H455" stroke="#979797" stroke-width="1"/><path d="M0 133.5H455" stroke="#979797" stroke-width="1"/><path d="M0 143.8H455" stroke="#979797" stroke-width="1"/><path d="M0 154.0H455" stroke="#979797" stroke-width="1"/><path d="M0 164.2H455" stroke="#979797" stroke-width="1"/><path d="M0 174.5H455" stroke="#8c8c8c" stroke-width="1.2"/><path d="M0 184.8H455" stroke="#979797" stroke-width="1"/><path d="M0 195.0H455" stroke="#979797" stroke-width="1"/><path d="M0 205.2H455" stroke="#979797" stroke-width="1"/><path d="M0 215.5H455" stroke="#979797" stroke-width="1"/><path d="M0 225.8H455" stroke="#979797" stroke-width="1"/><path d="M0 236.0H455" stroke="#979797" stroke-width="1"/><path d="M0 246.2H455" stroke="#979797" stroke-width="1"/><path d="M0 256.5H455" stroke="#979797" stroke-width="1"/><path d="M0 266.8H455" stroke="#979797" stroke-width="1"/><path d="M0 277.0H455" stroke="#8c8c8c" stroke-width="1.2"/><path d="M0 287.2H455" stroke="#979797" stroke-width="1"/><path d="M0 297.5H455" stroke="#979797" stroke-width="1"/><path d="M0 307.8H455" stroke="#979797" stroke-width="1"/><path d="M0 318.0H455" stroke="#979797" stroke-width="1"/><g transform="translate(-96,-837)"><path d="M350.5 837V1011.5" stroke="#3a9a3a" stroke-width="1.6"/><path d="M350.5 1011.5H551" stroke="#9a4a3a" stroke-width="1.6"/><path d="M266.9 923.3 L463.0 923.3 L463.0 1054.5 L266.9 1054.5 Z" fill="none" stroke="#7432c8" stroke-width="2.4" stroke-linejoin="round"/><path d="M382.3 1158.0 L303.9 1015.8 L414.8 952.6 L505.9 1110.9 L430.6 1153.7" fill="none" stroke="#000" stroke-width="1.3" stroke-linejoin="round"/><path d="M359.3 984.2 L449.5 1142.4" fill="none" stroke="#000" stroke-width="1.3" stroke-linejoin="round"/><rect x="356.3" y="981.2" width="6" height="6" fill="#fff" stroke="#000" stroke-width="1.2"/><path d="M443 1143H457M450 1136V1150" stroke="#000" stroke-width="1.1"/><rect x="447" y="1140" width="6" height="6" fill="none" stroke="#000" stroke-width="1"/><g fill="#b8b8b8" stroke="#000" stroke-width="1.1"><rect x="481.5" y="1108.5" width="3" height="6"/><rect x="481.5" y="1133.5" width="3" height="6"/><rect x="468" y="1122.5" width="6" height="3"/><rect x="494" y="1122.5" width="6" height="3"/></g><path d="M141.6 1075.8V1111.8H175.6" fill="none" stroke="#6a6a6a" stroke-width="1.2"/><text x="145.6" y="1080.8" font-family="Liberation Sans" font-size="14" fill="#6a6a6a">y</text><text x="179.6" y="1115.8" font-family="Liberation Sans" font-size="14" fill="#6a6a6a">x</text></g><rect x="0.5" y="0.5" width="454" height="317" fill="none" stroke="#707070" stroke-width="1"/></svg>
<div class="a" style="left:97px;top:838px;width:58px;height:21px;background:#bccddb;border-radius:0 0 3px 0"></div>
<div class="a t" style="left:107.0px;top:841.3px;font-size:15px;line-height:15px;color:#4a5866;transform:scaleX(1.0337);transform-origin:0 0;">Top</div>
<div class="a" style="left:141px;top:841px;width:1.5px;height:16px;background:#222"></div>
<svg class="a" style="left:144px;top:845px;" width="10" height="8" viewBox="0 0 10 8"><path d="M1 1.5H9L5 6.5Z" fill="#222"/></svg>
<svg class="a" style="left:96px;top:1158px" width="455" height="320" viewBox="0 0 455 320"><rect width="455" height="320" fill="#a2a2a2"/><path d="M0.7 0V320" stroke="#979797" stroke-width="1"/><path d="M11.0 0V320" stroke="#979797" stroke-width="1"/><path d="M21.3 0V320" stroke="#8c8c8c" stroke-width="1.2"/><path d="M31.6 0V320" stroke="#979797" stroke-width="1"/><path d="M41.9 0V320" stroke="#979797" stroke-width="1"/><path d="M52.2 0V320" stroke="#979797" stroke-width="1"/><path d="M62.5 0V320" stroke="#979797" stroke-width="1"/><path d="M72.8 0V320" stroke="#979797" stroke-width="1"/><path d="M83.1 0V320" stroke="#979797" stroke-width="1"/><path d="M93.4 0V320" stroke="#979797" stroke-width="1"/><path d="M103.7 0V320" stroke="#979797" stroke-width="1"/><path d="M114.0 0V320" stroke="#979797" stroke-width="1"/><path d="M124.3 0V320" stroke="#8c8c8c" stroke-width="1.2"/><path d="M134.6 0V320" stroke="#979797" stroke-width="1"/><path d="M144.9 0V320" stroke="#979797" stroke-width="1"/><path d="M155.2 0V320" stroke="#979797" stroke-width="1"/><path d="M165.5 0V320" stroke="#979797" stroke-width="1"/><path d="M175.8 0V320" stroke="#979797" stroke-width="1"/><path d="M186.1 0V320" stroke="#979797" stroke-width="1"/><path d="M196.4 0V320" stroke="#979797" stroke-width="1"/><path d="M206.7 0V320" stroke="#979797" stroke-width="1"/><path d="M217.0 0V320" stroke="#979797" stroke-width="1"/><path d="M227.3 0V320" stroke="#8c8c8c" stroke-width="1.2"/><path d="M237.6 0V320" stroke="#979797" stroke-width="1"/><path d="M247.9 0V320" stroke="#979797" stroke-width="1"/><path d="M258.2 0V320" stroke="#979797" stroke-width="1"/><path d="M268.5 0V320" stroke="#979797" stroke-width="1"/><path d="M278.8 0V320" stroke="#979797" stroke-width="1"/><path d="M289.1 0V320" stroke="#979797" stroke-width="1"/><path d="M299.4 0V320" stroke="#979797" stroke-width="1"/><path d="M309.7 0V320" stroke="#979797" stroke-width="1"/><path d="M320.0 0V320" stroke="#979797" stroke-width="1"/><path d="M330.3 0V320" stroke="#8c8c8c" stroke-width="1.2"/><path d="M340.6 0V320" stroke="#979797" stroke-width="1"/><path d="M350.9 0V320" stroke="#979797" stroke-width="1"/><path d="M361.2 0V320" stroke="#979797" stroke-width="1"/><path d="M371.5 0V320" stroke="#979797" stroke-width="1"/><path d="M381.8 0V320" stroke="#979797" stroke-width="1"/><path d="M392.1 0V320" stroke="#979797" stroke-width="1"/><path d="M402.4 0V320" stroke="#979797" stroke-width="1"/><path d="M412.7 0V320" stroke="#979797" stroke-width="1"/><path d="M423.0 0V320" stroke="#979797" stroke-width="1"/><path d="M433.3 0V320" stroke="#8c8c8c" stroke-width="1.2"/><path d="M443.6 0V320" stroke="#979797" stroke-width="1"/><path d="M453.9 0V320" stroke="#979797" stroke-width="1"/><path d="M0 6.0H455" stroke="#979797" stroke-width="1"/><path d="M0 16.2H455" stroke="#979797" stroke-width="1"/><path d="M0 26.5H455" stroke="#979797" stroke-width="1"/><path d="M0 36.7H455" stroke="#979797" stroke-width="1"/><path d="M0 47.0H455" stroke="#979797" stroke-width="1"/><path d="M0 57.2H455" stroke="#8c8c8c" stroke-width="1.2"/><path d="M0 67.5H455" stroke="#979797" stroke-width="1"/><path d="M0 77.7H455" stroke="#979797" stroke-width="1"/><path d="M0 88.0H455" stroke="#979797" stroke-width="1"/><path d="M0 98.2H455" stroke="#979797" stroke-width="1"/><path d="M0 108.5H455" stroke="#979797" stroke-width="1"/><path d="M0 118.7H455" stroke="#979797" stroke-width="1"/><path d="M0 129.0H455" stroke="#979797" stroke-width="1"/><path d="M0 139.2H455" stroke="#979797" stroke-width="1"/><path d="M0 149.5H455" stroke="#979797" stroke-width="1"/><path d="M0 159.7H455" stroke="#8c8c8c" stroke-width="1.2"/><path d="M0 170.0H455" stroke="#979797" stroke-width="1"/><path d="M0 180.2H455" stroke="#979797" stroke-width="1"/><path d="M0 190.5H455" stroke="#979797" stroke-width="1"/><path d="M0 200.7H455" stroke="#979797" stroke-width="1"/><path d="M0 211.0H455" stroke="#979797" stroke-width="1"/><path d="M0 221.2H455" stroke="#979797" stroke-width="1"/><path d="M0 231.5H455" stroke="#979797" stroke-width="1"/><path d="M0 241.7H455" stroke="#979797" stroke-width="1"/><path d="M0 252.0H455" stroke="#979797" stroke-width="1"/><path d="M0 262.2H455" stroke="#8c8c8c" stroke-width="1.2"/><path d="M0 272.5H455" stroke="#979797" stroke-width="1"/><path d="M0 282.7H455" stroke="#979797" stroke-width="1"/><path d="M0 293.0H455" stroke="#979797" stroke-width="1"/><path d="M0 303.2H455" stroke="#979797" stroke-width="1"/><path d="M0 313.5H455" stroke="#979797" stroke-width="1"/><g transform="translate(-96,-1158)"><path d="M323.3 1158V1317.7" stroke="#3a9a3a" stroke-width="1.6"/><path d="M323.3 1317.7H551" stroke="#9a4a3a" stroke-width="1.6"/><path d="M277.3 1190.6 L477.9 1190.6 L477.9 1297.9 L277.3 1297.9 Z" fill="none" stroke="#000" stroke-width="1.3" stroke-linejoin="round"/><path d="M368.4 1190.6 L368.4 1297.9" fill="none" stroke="#111" stroke-width="1.15" stroke-linejoin="round"/><path d="M387.7 1190.6 L387.7 1297.9" fill="none" stroke="#111" stroke-width="1.15" stroke-linejoin="round"/><path d="M239.9 1317.7 L239.9 1277.6 L436.4 1242.4 L436.4 1317.7 Z" fill="none" stroke="#7432c8" stroke-width="2.4" stroke-linejoin="round"/><rect x="328.4" y="1187.6" width="6" height="6" fill="#fff" stroke="#000" stroke-width="1.2"/><path d="M418.8 1190.6H428.8M423.8 1184.6V1196.6" stroke="#000" stroke-width="1.2"/><circle cx="423.8" cy="1190.6" r="2.5" fill="none" stroke="#000" stroke-width="1"/><path d="M141.6 1398V1434H175.6" fill="none" stroke="#6a6a6a" stroke-width="1.2"/><text x="145.6" y="1403" font-family="Liberation Sans" font-size="14" fill="#6a6a6a">z</text><text x="179.6" y="1438" font-family="Liberation Sans" font-size="14" fill="#6a6a6a">x</text></g><rect x="0.5" y="0.5" width="454" height="319" fill="none" stroke="#707070" stroke-width="1"/></svg>
<div class="a" style="left:97px;top:1159px;width:66px;height:21px;background:#bccddb;border-radius:0 0 3px 0"></div>
<div class="a t" style="left:107.0px;top:1162.3px;font-size:15px;line-height:15px;color:#4a5866;transform:scaleX(0.9711);transform-origin:0 0;">Front</div>
<div class="a" style="left:149px;top:1162px;width:1.5px;height:16px;background:#222"></div>
<svg class="a" style="left:152px;top:1166px;" width="10" height="8" viewBox="0 0 10 8"><path d="M1 1.5H9L5 6.5Z" fill="#222"/></svg>
<svg class="a" style="left:553px;top:1158px" width="453" height="320" viewBox="0 0 453 320"><rect width="453" height="320" fill="#a2a2a2"/><path d="M10.2 0V320" stroke="#979797" stroke-width="1"/><path d="M20.5 0V320" stroke="#8c8c8c" stroke-width="1.2"/><path d="M30.8 0V320" stroke="#979797" stroke-width="1"/><path d="M41.1 0V320" stroke="#979797" stroke-width="1"/><path d="M51.4 0V320" stroke="#979797" stroke-width="1"/><path d="M61.7 0V320" stroke="#979797" stroke-width="1"/><path d="M72.0 0V320" stroke="#979797" stroke-width="1"/><path d="M82.3 0V320" stroke="#979797" stroke-width="1"/><path d="M92.6 0V320" stroke="#979797" stroke-width="1"/><path d="M102.9 0V320" stroke="#979797" stroke-width="1"/><path d="M113.2 0V320" stroke="#979797" stroke-width="1"/><path d="M123.5 0V320" stroke="#8c8c8c" stroke-width="1.2"/><path d="M133.8 0V320" stroke="#979797" stroke-width="1"/><path d="M144.1 0V320" stroke="#979797" stroke-width="1"/><path d="M154.4 0V320" stroke="#979797" stroke-width="1"/><path d="M164.7 0V320" stroke="#979797" stroke-width="1"/><path d="M175.0 0V320" stroke="#979797" stroke-width="1"/><path d="M185.3 0V320" stroke="#979797" stroke-width="1"/><path d="M195.6 0V320" stroke="#979797" stroke-width="1"/><path d="M205.9 0V320" stroke="#979797" stroke-width="1"/><path d="M216.2 0V320" stroke="#979797" stroke-width="1"/><path d="M226.5 0V320" stroke="#8c8c8c" stroke-width="1.2"/><path d="M236.8 0V320" stroke="#979797" stroke-width="1"/><path d="M247.1 0V320" stroke="#979797" stroke-width="1"/><path d="M257.4 0V320" stroke="#979797" stroke-width="1"/><path d="M267.7 0V320" stroke="#979797" stroke-width="1"/><path d="M278.0 0V320" stroke="#979797" stroke-width="1"/><path d="M288.3 0V320" stroke="#979797" stroke-width="1"/><path d="M298.6 0V320" stroke="#979797" stroke-width="1"/><path d="M308.9 0V320" stroke="#979797" stroke-width="1"/><path d="M319.2 0V320" stroke="#979797" stroke-width="1"/><path d="M329.5 0V320" stroke="#8c8c8c" stroke-width="1.2"/><path d="M339.8 0V320" stroke="#979797" stroke-width="1"/><path d="M350.1 0V320" stroke="#979797" stroke-width="1"/><path d="M360.4 0V320" stroke="#979797" stroke-width="1"/><path d="M370.7 0V320" stroke="#979797" stroke-width="1"/><path d="M381.0 0V320" stroke="#979797" stroke-width="1"/><path d="M391.3 0V320" stroke="#979797" stroke-width="1"/><path d="M401.6 0V320" stroke="#979797" stroke-width="1"/><path d="M411.9 0V320" stroke="#979797" stroke-width="1"/><path d="M422.2 0V320" stroke="#979797" stroke-width="1"/><path d="M432.5 0V320" stroke="#8c8c8c" stroke-width="1.2"/><path d="M442.8 0V320" stroke="#979797" stroke-width="1"/><path d="M0 6.5H453" stroke="#979797" stroke-width="1"/><path d="M0 16.7H453" stroke="#979797" stroke-width="1"/><path d="M0 27.0H453" stroke="#979797" stroke-width="1"/><path d="M0 37.2H453" stroke="#979797" stroke-width="1"/><path d="M0 47.5H453" stroke="#979797" stroke-width="1"/><path d="M0 57.7H453" stroke="#8c8c8c" stroke-width="1.2"/><path d="M0 68.0H453" stroke="#979797" stroke-width="1"/><path d="M0 78.2H453" stroke="#979797" stroke-width="1"/><path d="M0 88.5H453" stroke="#979797" stroke-width="1"/><path d="M0 98.7H453" stroke="#979797" stroke-width="1"/><path d="M0 109.0H453" stroke="#979797" stroke-width="1"/><path d="M0 119.2H453" stroke="#979797" stroke-width="1"/><path d="M0 129.5H453" stroke="#979797" stroke-width="1"/><path d="M0 139.7H453" stroke="#979797" stroke-width="1"/><path d="M0 150.0H453" stroke="#979797" stroke-width="1"/><path d="M0 160.2H453" stroke="#8c8c8c" stroke-width="1.2"/><path d="M0 170.5H453" stroke="#979797" stroke-width="1"/><path d="M0 180.7H453" stroke="#979797" stroke-width="1"/><path d="M0 191.0H453" stroke="#979797" stroke-width="1"/><path d="M0 201.2H453" stroke="#979797" stroke-width="1"/><path d="M0 211.5H453" stroke="#979797" stroke-width="1"/><path d="M0 221.7H453" stroke="#979797" stroke-width="1"/><path d="M0 232.0H453" stroke="#979797" stroke-width="1"/><path d="M0 242.2H453" stroke="#979797" stroke-width="1"/><path d="M0 252.5H453" stroke="#979797" stroke-width="1"/><path d="M0 262.7H453" stroke="#8c8c8c" stroke-width="1.2"/><path d="M0 273.0H453" stroke="#979797" stroke-width="1"/><path d="M0 283.2H453" stroke="#979797" stroke-width="1"/><path d="M0 293.5H453" stroke="#979797" stroke-width="1"/><path d="M0 303.7H453" stroke="#979797" stroke-width="1"/><path d="M0 314.0H453" stroke="#979797" stroke-width="1"/><g transform="translate(-553,-1158)"><path d="M779.5 1158V1318.2" stroke="#3a9a3a" stroke-width="1.6"/><path d="M779.5 1318.2H1006" stroke="#9a4a3a" stroke-width="1.6"/><path d="M615.7 1190.1 L838.6 1190.1 L838.6 1298.2 L615.7 1298.2 Z" fill="none" stroke="#000" stroke-width="1.3" stroke-linejoin="round"/><path d="M679.8 1190.1 L679.8 1298.2" fill="none" stroke="#111" stroke-width="1.15" stroke-linejoin="round"/><path d="M775.6 1190.1 L775.6 1298.2" fill="none" stroke="#111" stroke-width="1.15" stroke-linejoin="round"/><path d="M735.5 1241.9 L868.7 1241.9 L868.7 1318.2 L735.5 1318.2 Z" fill="none" stroke="#7432c8" stroke-width="2.4" stroke-linejoin="round"/><path d="M735.5 1277.6 L868.7 1277.6" fill="none" stroke="#7432c8" stroke-width="2.4" stroke-linejoin="round"/><rect x="803.3" y="1187.1" width="6" height="6" fill="#fff" stroke="#000" stroke-width="1.2"/><path d="M643.6 1190.1H653.6M648.6 1184.1V1196.1" stroke="#000" stroke-width="1.2"/><circle cx="648.6" cy="1190.1" r="2.5" fill="none" stroke="#000" stroke-width="1"/><path d="M598.5 1398V1434H632.5" fill="none" stroke="#6a6a6a" stroke-width="1.2"/><text x="602.5" y="1403" font-family="Liberation Sans" font-size="14" fill="#6a6a6a">z</text><text x="636.5" y="1438" font-family="Liberation Sans" font-size="14" fill="#6a6a6a">y</text></g><rect x="0.5" y="0.5" width="452" height="319" fill="none" stroke="#707070" stroke-width="1"/></svg>
<div class="a" style="left:554px;top:1159px;width:68px;height:21px;background:#bccddb;border-radius:0 0 3px 0"></div>
<div class="a t" style="left:564.0px;top:1162.3px;font-size:15px;line-height:15px;color:#4a5866;transform:scaleX(0.9424);transform-origin:0 0;">Right</div>
<div class="a" style="left:608px;top:1162px;width:1.5px;height:16px;background:#222"></div>
<svg class="a" style="left:611px;top:1166px;" width="10" height="8" viewBox="0 0 10 8"><path d="M1 1.5H9L5 6.5Z" fill="#222"/></svg>
<svg class="a" style="left:553px;top:837px" width="453" height="318" viewBox="0 0 453 318"><rect width="453" height="318" fill="#a2a2a2"/><g transform="translate(-553,-837)"><path d="M-4186.7 1737.3L63.5 848.6" stroke="#9b9b9b" stroke-width="0.8"/><path d="M-4142.9 1738.6L69.6 848.5" stroke="#9b9b9b" stroke-width="0.8"/><path d="M-4099.2 1739.9L75.6 848.4" stroke="#9b9b9b" stroke-width="0.8"/><path d="M-4055.4 1741.2L81.7 848.3" stroke="#9b9b9b" stroke-width="0.8"/><path d="M-4011.7 1742.5L87.6 848.2" stroke="#9b9b9b" stroke-width="0.8"/><path d="M-3967.9 1743.9L93.6 848.1" stroke="#8e8e8e" stroke-width="1.1"/><path d="M-3924.1 1745.2L99.5 848.0" stroke="#9b9b9b" stroke-width="0.8"/><path d="M-3880.4 1746.5L105.4 847.9" stroke="#9b9b9b" stroke-width="0.8"/><path d="M-3836.6 1747.8L111.3 847.8" stroke="#9b9b9b" stroke-width="0.8"/><path d="M-3792.9 1749.1L117.2 847.7" stroke="#9b9b9b" stroke-width="0.8"/><path d="M-3749.1 1750.4L123.0 847.6" stroke="#9b9b9b" stroke-width="0.8"/><path d="M-3705.4 1751.8L128.8 847.5" stroke="#9b9b9b" stroke-width="0.8"/><path d="M-3661.6 1753.1L134.6 847.4" stroke="#9b9b9b" stroke-width="0.8"/><path d="M-3617.8 1754.4L140.3 847.3" stroke="#9b9b9b" stroke-width="0.8"/><path d="M-3574.1 1755.7L146.1 847.2" stroke="#9b9b9b" stroke-width="0.8"/><path d="M-3530.3 1757.0L151.8 847.1" stroke="#8e8e8e" stroke-width="1.1"/><path d="M-3486.6 1758.3L157.4 847.1" stroke="#9b9b9b" stroke-width="0.8"/><path d="M-3442.8 1759.6L163.1 847.0" stroke="#9b9b9b" stroke-width="0.8"/><path d="M-3399.1 1761.0L168.7 846.9" stroke="#9b9b9b" stroke-width="0.8"/><path d="M-3355.3 1762.3L174.3 846.8" stroke="#9b9b9b" stroke-width="0.8"/><path d="M-3311.5 1763.6L179.9 846.7" stroke="#9b9b9b" stroke-width="0.8"/><path d="M-3267.8 1764.9L185.5 846.6" stroke="#9b9b9b" stroke-width="0.8"/><path d="M-3224.0 1766.2L191.0 846.5" stroke="#9b9b9b" stroke-width="0.8"/><path d="M-3180.3 1767.5L196.5 846.4" stroke="#9b9b9b" stroke-width="0.8"/><path d="M-3136.5 1768.9L202.0 846.3" stroke="#9b9b9b" stroke-width="0.8"/><path d="M-3092.8 1770.2L207.5 846.2" stroke="#8e8e8e" stroke-width="1.1"/><path d="M-3049.0 1771.5L212.9 846.1" stroke="#9b9b9b" stroke-width="0.8"/><path d="M-3005.2 1772.8L218.3 846.0" stroke="#9b9b9b" stroke-width="0.8"/><path d="M-2961.5 1774.1L223.7 846.0" stroke="#9b9b9b" stroke-width="0.8"/><path d="M-2917.7 1775.4L229.1 845.9" stroke="#9b9b9b" stroke-width="0.8"/><path d="M-2874.0 1776.7L234.5 845.8" stroke="#9b9b9b" stroke-width="0.8"/><path d="M-2830.2 1778.1L239.8 845.7" stroke="#9b9b9b" stroke-width="0.8"/><path d="M-2786.5 1779.4L245.1 845.6" stroke="#9b9b9b" stroke-width="0.8"/><path d="M-2742.7 1780.7L250.4 845.5" stroke="#9b9b9b" stroke-width="0.8"/><path d="M-2699.0 1782.0L255.7 845.4" stroke="#9b9b9b" stroke-width="0.8"/><path d="M-2655.2 1783.3L260.9 845.3" stroke="#8e8e8e" stroke-width="1.1"/><path d="M-2611.4 1784.6L266.1 845.3" stroke="#9b9b9b" stroke-width="0.8"/><path d="M-2567.7 1785.9L271.3 845.2" stroke="#9b9b9b" stroke-width="0.8"/><path d="M-2523.9 1787.3L276.5 845.1" stroke="#9b9b9b" stroke-width="0.8"/><path d="M-2480.2 1788.6L281.7 845.0" stroke="#9b9b9b" stroke-width="0.8"/><path d="M-2436.4 1789.9L286.8 844.9" stroke="#9b9b9b" stroke-width="0.8"/><path d="M-2392.7 1791.2L291.9 844.8" stroke="#9b9b9b" stroke-width="0.8"/><path d="M-2348.9 1792.5L297.0 844.7" stroke="#9b9b9b" stroke-width="0.8"/><path d="M-2305.2 1793.8L302.1 844.7" stroke="#9b9b9b" stroke-width="0.8"/><path d="M-2261.4 1795.2L307.2 844.6" stroke="#9b9b9b" stroke-width="0.8"/><path d="M-2217.7 1796.5L312.2 844.5" stroke="#8e8e8e" stroke-width="1.1"/><path d="M-2173.9 1797.8L317.2 844.4" stroke="#9b9b9b" stroke-width="0.8"/><path d="M-2130.1 1799.1L322.2 844.3" stroke="#9b9b9b" stroke-width="0.8"/><path d="M-2086.4 1800.4L327.2 844.2" stroke="#9b9b9b" stroke-width="0.8"/><path d="M-2042.6 1801.7L332.1 844.2" stroke="#9b9b9b" stroke-width="0.8"/><path d="M-1998.9 1803.0L337.1 844.1" stroke="#9b9b9b" stroke-width="0.8"/><path d="M-1955.1 1804.4L342.0 844.0" stroke="#9b9b9b" stroke-width="0.8"/><path d="M-1911.4 1805.7L346.9 843.9" stroke="#9b9b9b" stroke-width="0.8"/><path d="M-1867.6 1807.0L351.8 843.8" stroke="#9b9b9b" stroke-width="0.8"/><path d="M-1823.9 1808.3L356.6 843.8" stroke="#9b9b9b" stroke-width="0.8"/><path d="M-1780.1 1809.6L361.5 843.7" stroke="#8e8e8e" stroke-width="1.1"/><path d="M-1736.4 1810.9L366.3 843.6" stroke="#9b9b9b" stroke-width="0.8"/><path d="M-1692.6 1812.2L371.1 843.5" stroke="#9b9b9b" stroke-width="0.8"/><path d="M-1648.8 1813.6L375.9 843.4" stroke="#9b9b9b" stroke-width="0.8"/><path d="M-1605.1 1814.9L380.6 843.4" stroke="#9b9b9b" stroke-width="0.8"/><path d="M-1561.3 1816.2L385.4 843.3" stroke="#9b9b9b" stroke-width="0.8"/><path d="M-1517.6 1817.5L390.1 843.2" stroke="#9b9b9b" stroke-width="0.8"/><path d="M-1473.8 1818.8L394.8 843.1" stroke="#9b9b9b" stroke-width="0.8"/><path d="M-1430.1 1820.1L399.5 843.1" stroke="#9b9b9b" stroke-width="0.8"/><path d="M-1386.3 1821.5L404.2 843.0" stroke="#9b9b9b" stroke-width="0.8"/><path d="M-1342.6 1822.8L408.8 842.9" stroke="#8e8e8e" stroke-width="1.1"/><path d="M-1298.8 1824.1L413.5 842.8" stroke="#9b9b9b" stroke-width="0.8"/><path d="M-1255.1 1825.4L418.1 842.7" stroke="#9b9b9b" stroke-width="0.8"/><path d="M-1211.3 1826.7L422.7 842.7" stroke="#9b9b9b" stroke-width="0.8"/><path d="M-1167.6 1828.0L427.3 842.6" stroke="#9b9b9b" stroke-width="0.8"/><path d="M-1123.8 1829.3L431.8 842.5" stroke="#9b9b9b" stroke-width="0.8"/><path d="M-1080.1 1830.7L436.4 842.4" stroke="#9b9b9b" stroke-width="0.8"/><path d="M-1036.3 1832.0L440.9 842.4" stroke="#9b9b9b" stroke-width="0.8"/><path d="M-992.6 1833.3L445.4 842.3" stroke="#9b9b9b" stroke-width="0.8"/><path d="M-948.8 1834.6L449.9 842.2" stroke="#9b9b9b" stroke-width="0.8"/><path d="M-905.0 1835.9L454.4 842.1" stroke="#8e8e8e" stroke-width="1.1"/><path d="M1207.7 1899.4L2352.9 1115.8" stroke="#8e8e8e" stroke-width="1.1"/><path d="M-861.3 1837.2L458.8 842.1" stroke="#9b9b9b" stroke-width="0.8"/><path d="M1076.5 1895.5L2323.8 1109.5" stroke="#9b9b9b" stroke-width="0.8"/><path d="M-817.5 1838.6L463.3 842.0" stroke="#9b9b9b" stroke-width="0.8"/><path d="M945.3 1891.5L2295.5 1103.4" stroke="#9b9b9b" stroke-width="0.8"/><path d="M-773.8 1839.9L467.7 841.9" stroke="#9b9b9b" stroke-width="0.8"/><path d="M814.2 1887.6L2268.2 1097.5" stroke="#9b9b9b" stroke-width="0.8"/><path d="M-730.0 1841.2L472.1 841.9" stroke="#9b9b9b" stroke-width="0.8"/><path d="M683.0 1883.7L2241.8 1091.8" stroke="#9b9b9b" stroke-width="0.8"/><path d="M-686.3 1842.5L476.5 841.8" stroke="#9b9b9b" stroke-width="0.8"/><path d="M551.8 1879.7L2216.1 1086.3" stroke="#9b9b9b" stroke-width="0.8"/><path d="M-642.5 1843.8L480.9 841.7" stroke="#9b9b9b" stroke-width="0.8"/><path d="M420.6 1875.8L2191.3 1080.9" stroke="#9b9b9b" stroke-width="0.8"/><path d="M-598.8 1845.1L485.3 841.6" stroke="#9b9b9b" stroke-width="0.8"/><path d="M289.4 1871.8L2167.2 1075.7" stroke="#9b9b9b" stroke-width="0.8"/><path d="M-555.0 1846.4L489.6 841.6" stroke="#9b9b9b" stroke-width="0.8"/><path d="M158.2 1867.9L2143.8 1070.6" stroke="#9b9b9b" stroke-width="0.8"/><path d="M-511.3 1847.8L493.9 841.5" stroke="#9b9b9b" stroke-width="0.8"/><path d="M27.0 1863.9L2121.1 1065.7" stroke="#9b9b9b" stroke-width="0.8"/><path d="M-467.5 1849.1L498.3 841.4" stroke="#8e8e8e" stroke-width="1.1"/><path d="M-104.1 1860.0L2099.1 1061.0" stroke="#8e8e8e" stroke-width="1.1"/><path d="M-423.8 1850.4L502.5 841.4" stroke="#9b9b9b" stroke-width="0.8"/><path d="M-235.3 1856.0L2077.7 1056.3" stroke="#9b9b9b" stroke-width="0.8"/><path d="M-380.0 1851.7L506.8 841.3" stroke="#9b9b9b" stroke-width="0.8"/><path d="M-366.5 1852.1L2056.9 1051.8" stroke="#9b9b9b" stroke-width="0.8"/><path d="M-336.3 1853.0L511.1 841.2" stroke="#9b9b9b" stroke-width="0.8"/><path d="M-497.7 1848.2L2036.7 1047.5" stroke="#9b9b9b" stroke-width="0.8"/><path d="M-292.5 1854.3L515.3 841.1" stroke="#9b9b9b" stroke-width="0.8"/><path d="M-628.9 1844.2L2017.0 1043.2" stroke="#9b9b9b" stroke-width="0.8"/><path d="M-248.8 1855.6L519.6 841.1" stroke="#9b9b9b" stroke-width="0.8"/><path d="M-760.1 1840.3L1997.9 1039.1" stroke="#9b9b9b" stroke-width="0.8"/><path d="M-205.0 1857.0L523.8 841.0" stroke="#9b9b9b" stroke-width="0.8"/><path d="M-891.3 1836.3L1979.3 1035.1" stroke="#9b9b9b" stroke-width="0.8"/><path d="M-161.3 1858.3L528.0 840.9" stroke="#9b9b9b" stroke-width="0.8"/><path d="M-1022.5 1832.4L1961.1 1031.1" stroke="#9b9b9b" stroke-width="0.8"/><path d="M-117.5 1859.6L532.2 840.9" stroke="#9b9b9b" stroke-width="0.8"/><path d="M-1153.7 1828.4L1943.4 1027.3" stroke="#9b9b9b" stroke-width="0.8"/><path d="M-73.8 1860.9L536.4 840.8" stroke="#9b9b9b" stroke-width="0.8"/><path d="M-1284.9 1824.5L1926.2 1023.6" stroke="#9b9b9b" stroke-width="0.8"/><path d="M-30.0 1862.2L540.5 840.7" stroke="#8e8e8e" stroke-width="1.1"/><path d="M-1416.1 1820.6L1909.5 1020.0" stroke="#8e8e8e" stroke-width="1.1"/><path d="M13.7 1863.5L544.7 840.7" stroke="#9b9b9b" stroke-width="0.8"/><path d="M-1547.3 1816.6L1893.1 1016.4" stroke="#9b9b9b" stroke-width="0.8"/><path d="M57.5 1864.9L548.8 840.6" stroke="#9b9b9b" stroke-width="0.8"/><path d="M-1678.5 1812.7L1877.1 1013.0" stroke="#9b9b9b" stroke-width="0.8"/><path d="M101.2 1866.2L552.9 840.5" stroke="#9b9b9b" stroke-width="0.8"/><path d="M-1809.7 1808.7L1861.6 1009.6" stroke="#9b9b9b" stroke-width="0.8"/><path d="M145.0 1867.5L557.0 840.5" stroke="#9b9b9b" stroke-width="0.8"/><path d="M-1940.9 1804.8L1846.4 1006.4" stroke="#9b9b9b" stroke-width="0.8"/><path d="M188.7 1868.8L561.1 840.4" stroke="#9b9b9b" stroke-width="0.8"/><path d="M-2072.1 1800.8L1831.5 1003.1" stroke="#9b9b9b" stroke-width="0.8"/><path d="M232.5 1870.1L565.1 840.3" stroke="#9b9b9b" stroke-width="0.8"/><path d="M-2203.3 1796.9L1817.0 1000.0" stroke="#9b9b9b" stroke-width="0.8"/><path d="M276.2 1871.4L569.2 840.3" stroke="#9b9b9b" stroke-width="0.8"/><path d="M-2334.5 1793.0L1802.9 997.0" stroke="#9b9b9b" stroke-width="0.8"/><path d="M320.0 1872.7L573.2 840.2" stroke="#9b9b9b" stroke-width="0.8"/><path d="M-2465.7 1789.0L1789.1 994.0" stroke="#9b9b9b" stroke-width="0.8"/><path d="M363.7 1874.1L577.2 840.1" stroke="#9b9b9b" stroke-width="0.8"/><path d="M-2596.9 1785.1L1775.6 991.1" stroke="#9b9b9b" stroke-width="0.8"/><path d="M407.5 1875.4L581.3 840.1" stroke="#8e8e8e" stroke-width="1.1"/><path d="M-2728.1 1781.1L1762.4 988.2" stroke="#8e8e8e" stroke-width="1.1"/><path d="M451.2 1876.7L585.2 840.0" stroke="#9b9b9b" stroke-width="0.8"/><path d="M-2859.3 1777.2L1749.4 985.4" stroke="#9b9b9b" stroke-width="0.8"/><path d="M495.0 1878.0L589.2 839.9" stroke="#9b9b9b" stroke-width="0.8"/><path d="M-2990.5 1773.2L1736.8 982.7" stroke="#9b9b9b" stroke-width="0.8"/><path d="M538.7 1879.3L593.2 839.9" stroke="#9b9b9b" stroke-width="0.8"/><path d="M-3121.7 1769.3L1724.5 980.0" stroke="#9b9b9b" stroke-width="0.8"/><path d="M582.5 1880.6L597.1 839.8" stroke="#9b9b9b" stroke-width="0.8"/><path d="M-3252.9 1765.4L1712.4 977.4" stroke="#9b9b9b" stroke-width="0.8"/><path d="M626.2 1881.9L601.1 839.7" stroke="#9b9b9b" stroke-width="0.8"/><path d="M-3384.1 1761.4L1700.5 974.8" stroke="#9b9b9b" stroke-width="0.8"/><path d="M670.0 1883.3L605.0 839.7" stroke="#9b9b9b" stroke-width="0.8"/><path d="M-3515.3 1757.5L1688.9 972.3" stroke="#9b9b9b" stroke-width="0.8"/><path d="M713.7 1884.6L608.9 839.6" stroke="#9b9b9b" stroke-width="0.8"/><path d="M-3646.5 1753.5L1677.6 969.9" stroke="#9b9b9b" stroke-width="0.8"/><path d="M757.5 1885.9L612.8 839.5" stroke="#9b9b9b" stroke-width="0.8"/><path d="M-3777.8 1749.6L1666.5 967.5" stroke="#9b9b9b" stroke-width="0.8"/><path d="M801.2 1887.2L616.7 839.5" stroke="#9b9b9b" stroke-width="0.8"/><path d="M-3909.0 1745.6L1655.6 965.1" stroke="#9b9b9b" stroke-width="0.8"/><path d="M845.0 1888.5L620.6 839.4" stroke="#8e8e8e" stroke-width="1.1"/><path d="M-4040.2 1741.7L1644.9 962.8" stroke="#8e8e8e" stroke-width="1.1"/><path d="M888.7 1889.8L624.4 839.3" stroke="#9b9b9b" stroke-width="0.8"/><path d="M-4171.4 1737.7L1634.5 960.6" stroke="#9b9b9b" stroke-width="0.8"/><path d="M932.5 1891.1L628.3 839.3" stroke="#9b9b9b" stroke-width="0.8"/><path d="M-3948.4 1687.5L1624.2 958.4" stroke="#9b9b9b" stroke-width="0.8"/><path d="M976.2 1892.5L632.1 839.2" stroke="#9b9b9b" stroke-width="0.8"/><path d="M-3705.7 1636.7L1614.2 956.2" stroke="#9b9b9b" stroke-width="0.8"/><path d="M1020.0 1893.8L635.9 839.2" stroke="#9b9b9b" stroke-width="0.8"/><path d="M-3487.6 1591.1L1604.3 954.1" stroke="#9b9b9b" stroke-width="0.8"/><path d="M1063.7 1895.1L639.7 839.1" stroke="#9b9b9b" stroke-width="0.8"/><path d="M-3290.6 1549.9L1594.7 952.0" stroke="#9b9b9b" stroke-width="0.8"/><path d="M1107.5 1896.4L643.5 839.0" stroke="#9b9b9b" stroke-width="0.8"/><path d="M-3111.7 1512.5L1585.2 949.9" stroke="#9b9b9b" stroke-width="0.8"/><path d="M1151.2 1897.7L647.3 839.0" stroke="#9b9b9b" stroke-width="0.8"/><path d="M-2948.5 1478.4L1575.9 947.9" stroke="#9b9b9b" stroke-width="0.8"/><path d="M1195.0 1899.0L651.0 838.9" stroke="#9b9b9b" stroke-width="0.8"/><path d="M-2799.1 1447.1L1566.8 945.9" stroke="#9b9b9b" stroke-width="0.8"/><path d="M1238.7 1900.4L654.8 838.8" stroke="#9b9b9b" stroke-width="0.8"/><path d="M-2661.7 1418.4L1557.8 944.0" stroke="#9b9b9b" stroke-width="0.8"/><path d="M1282.5 1901.7L658.5 838.8" stroke="#8e8e8e" stroke-width="1.1"/><path d="M-2535.0 1391.9L1549.0 942.1" stroke="#8e8e8e" stroke-width="1.1"/><path d="M1326.2 1903.0L662.2 838.7" stroke="#9b9b9b" stroke-width="0.8"/><path d="M-2417.8 1367.4L1540.4 940.2" stroke="#9b9b9b" stroke-width="0.8"/><path d="M1370.0 1904.3L665.9 838.7" stroke="#9b9b9b" stroke-width="0.8"/><path d="M-2309.1 1344.7L1531.9 938.4" stroke="#9b9b9b" stroke-width="0.8"/><path d="M1413.7 1905.6L669.6 838.6" stroke="#9b9b9b" stroke-width="0.8"/><path d="M-2207.9 1323.5L1523.6 936.6" stroke="#9b9b9b" stroke-width="0.8"/><path d="M1457.4 1906.9L673.3 838.5" stroke="#9b9b9b" stroke-width="0.8"/><path d="M-2113.5 1303.8L1515.4 934.8" stroke="#9b9b9b" stroke-width="0.8"/><path d="M1501.2 1908.2L677.0 838.5" stroke="#9b9b9b" stroke-width="0.8"/><path d="M-2025.3 1285.4L1507.4 933.1" stroke="#9b9b9b" stroke-width="0.8"/><path d="M1544.9 1909.6L680.6 838.4" stroke="#9b9b9b" stroke-width="0.8"/><path d="M-1942.6 1268.1L1499.5 931.4" stroke="#9b9b9b" stroke-width="0.8"/><path d="M1588.7 1910.9L684.3 838.4" stroke="#9b9b9b" stroke-width="0.8"/><path d="M-1865.0 1251.8L1491.7 929.7" stroke="#9b9b9b" stroke-width="0.8"/><path d="M1632.4 1912.2L687.9 838.3" stroke="#9b9b9b" stroke-width="0.8"/><path d="M-1792.0 1236.6L1484.1 928.1" stroke="#9b9b9b" stroke-width="0.8"/><path d="M1676.2 1913.5L691.5 838.2" stroke="#9b9b9b" stroke-width="0.8"/><path d="M-1723.2 1222.2L1476.6 926.5" stroke="#9b9b9b" stroke-width="0.8"/><path d="M1719.9 1914.8L695.2 838.2" stroke="#8e8e8e" stroke-width="1.1"/><path d="M-1658.2 1208.6L1469.3 924.9" stroke="#8e8e8e" stroke-width="1.1"/><path d="M1763.7 1916.1L698.7 838.1" stroke="#9b9b9b" stroke-width="0.8"/><path d="M-1596.8 1195.8L1462.0 923.3" stroke="#9b9b9b" stroke-width="0.8"/><path d="M1807.4 1917.4L702.3 838.1" stroke="#9b9b9b" stroke-width="0.8"/><path d="M-1538.6 1183.6L1454.9 921.8" stroke="#9b9b9b" stroke-width="0.8"/><path d="M1851.2 1918.8L705.9 838.0" stroke="#9b9b9b" stroke-width="0.8"/><path d="M-1483.4 1172.1L1447.9 920.2" stroke="#9b9b9b" stroke-width="0.8"/><path d="M1894.9 1920.1L709.5 837.9" stroke="#9b9b9b" stroke-width="0.8"/><path d="M-1431.0 1161.1L1441.0 918.8" stroke="#9b9b9b" stroke-width="0.8"/><path d="M1938.7 1921.4L713.0 837.9" stroke="#9b9b9b" stroke-width="0.8"/><path d="M-1381.2 1150.7L1434.2 917.3" stroke="#9b9b9b" stroke-width="0.8"/><path d="M1982.4 1922.7L716.5 837.8" stroke="#9b9b9b" stroke-width="0.8"/><path d="M-1333.8 1140.8L1427.5 915.8" stroke="#9b9b9b" stroke-width="0.8"/><path d="M2026.2 1924.0L720.1 837.8" stroke="#9b9b9b" stroke-width="0.8"/><path d="M-1288.6 1131.3L1420.9 914.4" stroke="#9b9b9b" stroke-width="0.8"/><path d="M2069.9 1925.3L723.6 837.7" stroke="#9b9b9b" stroke-width="0.8"/><path d="M-1245.4 1122.3L1414.5 913.0" stroke="#9b9b9b" stroke-width="0.8"/><path d="M2113.7 1926.7L727.1 837.6" stroke="#9b9b9b" stroke-width="0.8"/><path d="M-1204.2 1113.7L1408.1 911.6" stroke="#9b9b9b" stroke-width="0.8"/><path d="M2157.4 1928.0L730.6 837.6" stroke="#8e8e8e" stroke-width="1.1"/><path d="M-1164.8 1105.4L1401.8 910.3" stroke="#8e8e8e" stroke-width="1.1"/><path d="M2201.1 1929.3L734.1 837.5" stroke="#9b9b9b" stroke-width="0.8"/><path d="M-1127.0 1097.5L1395.6 909.0" stroke="#9b9b9b" stroke-width="0.8"/><path d="M2244.9 1930.6L737.5 837.5" stroke="#9b9b9b" stroke-width="0.8"/><path d="M-1090.9 1090.0L1389.6 907.6" stroke="#9b9b9b" stroke-width="0.8"/><path d="M2288.6 1931.9L741.0 837.4" stroke="#9b9b9b" stroke-width="0.8"/><path d="M-1056.2 1082.7L1383.6 906.4" stroke="#9b9b9b" stroke-width="0.8"/><path d="M2332.4 1933.2L744.4 837.4" stroke="#9b9b9b" stroke-width="0.8"/><path d="M-1023.0 1075.8L1377.7 905.1" stroke="#9b9b9b" stroke-width="0.8"/><path d="M2376.1 1934.5L747.8 837.3" stroke="#9b9b9b" stroke-width="0.8"/><path d="M-991.0 1069.1L1371.9 903.8" stroke="#9b9b9b" stroke-width="0.8"/><path d="M2419.9 1935.9L751.3 837.2" stroke="#9b9b9b" stroke-width="0.8"/><path d="M-960.3 1062.7L1366.1 902.6" stroke="#9b9b9b" stroke-width="0.8"/><path d="M2463.6 1937.2L754.7 837.2" stroke="#9b9b9b" stroke-width="0.8"/><path d="M-930.7 1056.5L1360.5 901.4" stroke="#9b9b9b" stroke-width="0.8"/><path d="M2507.4 1938.5L758.1 837.1" stroke="#9b9b9b" stroke-width="0.8"/><path d="M-902.3 1050.5L1355.0 900.2" stroke="#9b9b9b" stroke-width="0.8"/><path d="M2551.1 1939.8L761.5 837.1" stroke="#9b9b9b" stroke-width="0.8"/><path d="M-874.8 1044.8L1349.5 899.0" stroke="#9b9b9b" stroke-width="0.8"/><path d="M2594.9 1941.1L764.8 837.0" stroke="#8e8e8e" stroke-width="1.1"/><path d="M-848.4 1039.3L1344.1 897.8" stroke="#8e8e8e" stroke-width="1.1"/><path d="M2638.6 1942.4L768.2 837.0" stroke="#9b9b9b" stroke-width="0.8"/><path d="M-822.9 1034.0L1338.8 896.7" stroke="#9b9b9b" stroke-width="0.8"/><path d="M2682.4 1943.7L771.5 836.9" stroke="#9b9b9b" stroke-width="0.8"/><path d="M-798.3 1028.8L1333.5 895.5" stroke="#9b9b9b" stroke-width="0.8"/><path d="M2726.1 1945.1L774.9 836.9" stroke="#9b9b9b" stroke-width="0.8"/><path d="M-774.5 1023.8L1328.3 894.4" stroke="#9b9b9b" stroke-width="0.8"/><path d="M2769.8 1946.4L778.2 836.8" stroke="#9b9b9b" stroke-width="0.8"/><path d="M-751.5 1019.0L1323.2 893.3" stroke="#9b9b9b" stroke-width="0.8"/><path d="M2813.6 1947.7L781.5 836.7" stroke="#9b9b9b" stroke-width="0.8"/><path d="M-729.3 1014.4L1318.2 892.2" stroke="#9b9b9b" stroke-width="0.8"/><path d="M2857.3 1949.0L784.8 836.7" stroke="#9b9b9b" stroke-width="0.8"/><path d="M-707.8 1009.9L1313.3 891.2" stroke="#9b9b9b" stroke-width="0.8"/><path d="M2901.1 1950.3L788.1 836.6" stroke="#9b9b9b" stroke-width="0.8"/><path d="M-687.0 1005.5L1308.4 890.1" stroke="#9b9b9b" stroke-width="0.8"/><path d="M2944.8 1951.6L791.4 836.6" stroke="#9b9b9b" stroke-width="0.8"/><path d="M-666.8 1001.3L1303.5 889.1" stroke="#9b9b9b" stroke-width="0.8"/><path d="M2988.6 1952.9L794.7 836.5" stroke="#9b9b9b" stroke-width="0.8"/><path d="M-647.2 997.2L1298.8 888.0" stroke="#9b9b9b" stroke-width="0.8"/><path d="M3032.3 1954.3L798.0 836.5" stroke="#8e8e8e" stroke-width="1.1"/><path d="M-628.3 993.3L1294.1 887.0" stroke="#8e8e8e" stroke-width="1.1"/><path d="M3076.1 1955.6L801.2 836.4" stroke="#9b9b9b" stroke-width="0.8"/><path d="M-609.9 989.4L1289.5 886.0" stroke="#9b9b9b" stroke-width="0.8"/><path d="M3119.8 1956.9L804.5 836.4" stroke="#9b9b9b" stroke-width="0.8"/><path d="M-592.1 985.7L1284.9 885.0" stroke="#9b9b9b" stroke-width="0.8"/><path d="M3163.5 1958.2L807.7 836.3" stroke="#9b9b9b" stroke-width="0.8"/><path d="M-574.7 982.1L1280.4 884.0" stroke="#9b9b9b" stroke-width="0.8"/><path d="M3207.3 1959.5L810.9 836.3" stroke="#9b9b9b" stroke-width="0.8"/><path d="M-557.9 978.5L1275.9 883.1" stroke="#9b9b9b" stroke-width="0.8"/><path d="M3251.0 1960.8L814.1 836.2" stroke="#9b9b9b" stroke-width="0.8"/><path d="M-541.6 975.1L1271.5 882.1" stroke="#9b9b9b" stroke-width="0.8"/><path d="M3294.8 1962.2L817.3 836.2" stroke="#9b9b9b" stroke-width="0.8"/><path d="M-525.7 971.8L1267.2 881.2" stroke="#9b9b9b" stroke-width="0.8"/><path d="M3338.5 1963.5L820.5 836.1" stroke="#9b9b9b" stroke-width="0.8"/><path d="M-510.2 968.6L1262.9 880.3" stroke="#9b9b9b" stroke-width="0.8"/><path d="M3382.3 1964.8L823.7 836.0" stroke="#9b9b9b" stroke-width="0.8"/><path d="M-495.2 965.4L1258.7 879.4" stroke="#9b9b9b" stroke-width="0.8"/><path d="M3426.0 1966.1L826.9 836.0" stroke="#9b9b9b" stroke-width="0.8"/><path d="M-480.5 962.4L1254.5 878.5" stroke="#9b9b9b" stroke-width="0.8"/><path d="M3469.8 1967.4L830.1 835.9" stroke="#8e8e8e" stroke-width="1.1"/><path d="M-466.3 959.4L1250.4 877.6" stroke="#8e8e8e" stroke-width="1.1"/><path d="M3513.5 1968.7L833.2 835.9" stroke="#9b9b9b" stroke-width="0.8"/><path d="M-452.4 956.5L1246.3 876.7" stroke="#9b9b9b" stroke-width="0.8"/><path d="M3557.2 1970.0L836.4 835.8" stroke="#9b9b9b" stroke-width="0.8"/><path d="M-438.9 953.7L1242.3 875.8" stroke="#9b9b9b" stroke-width="0.8"/><path d="M3601.0 1971.4L839.5 835.8" stroke="#9b9b9b" stroke-width="0.8"/><path d="M-425.7 950.9L1238.3 875.0" stroke="#9b9b9b" stroke-width="0.8"/><path d="M3644.7 1972.7L842.6 835.7" stroke="#9b9b9b" stroke-width="0.8"/><path d="M-412.9 948.2L1234.4 874.1" stroke="#9b9b9b" stroke-width="0.8"/><path d="M3688.5 1974.0L845.7 835.7" stroke="#9b9b9b" stroke-width="0.8"/><path d="M-400.3 945.6L1230.5 873.3" stroke="#9b9b9b" stroke-width="0.8"/><path d="M3732.2 1975.3L848.8 835.6" stroke="#9b9b9b" stroke-width="0.8"/><path d="M-388.1 943.0L1226.7 872.5" stroke="#9b9b9b" stroke-width="0.8"/><path d="M3776.0 1976.6L851.9 835.6" stroke="#9b9b9b" stroke-width="0.8"/><path d="M-376.2 940.6L1222.9 871.6" stroke="#9b9b9b" stroke-width="0.8"/><path d="M3819.7 1977.9L855.0 835.5" stroke="#9b9b9b" stroke-width="0.8"/><path d="M-364.6 938.1L1219.2 870.8" stroke="#9b9b9b" stroke-width="0.8"/><path d="M3863.5 1979.2L858.1 835.5" stroke="#9b9b9b" stroke-width="0.8"/><path d="M-353.2 935.7L1215.5 870.0" stroke="#9b9b9b" stroke-width="0.8"/><path d="M3907.2 1980.6L861.1 835.4" stroke="#8e8e8e" stroke-width="1.1"/><path d="M-342.1 933.4L1211.8 869.2" stroke="#8e8e8e" stroke-width="1.1"/><path d="M3950.9 1981.9L864.2 835.4" stroke="#9b9b9b" stroke-width="0.8"/><path d="M-331.2 931.2L1208.2 868.5" stroke="#9b9b9b" stroke-width="0.8"/><path d="M3994.7 1983.2L867.2 835.3" stroke="#9b9b9b" stroke-width="0.8"/><path d="M-320.7 928.9L1204.7 867.7" stroke="#9b9b9b" stroke-width="0.8"/><path d="M4038.4 1984.5L870.3 835.3" stroke="#9b9b9b" stroke-width="0.8"/><path d="M-310.3 926.8L1201.1 866.9" stroke="#9b9b9b" stroke-width="0.8"/><path d="M4082.2 1985.8L873.3 835.2" stroke="#9b9b9b" stroke-width="0.8"/><path d="M-300.2 924.7L1197.7 866.2" stroke="#9b9b9b" stroke-width="0.8"/><path d="M4125.9 1987.1L876.3 835.2" stroke="#9b9b9b" stroke-width="0.8"/><path d="M-290.3 922.6L1194.2 865.4" stroke="#9b9b9b" stroke-width="0.8"/><path d="M4169.7 1988.4L879.3 835.1" stroke="#9b9b9b" stroke-width="0.8"/><path d="M-280.6 920.6L1190.8 864.7" stroke="#9b9b9b" stroke-width="0.8"/><path d="M4213.4 1989.8L882.3 835.1" stroke="#9b9b9b" stroke-width="0.8"/><path d="M-271.1 918.6L1187.5 864.0" stroke="#9b9b9b" stroke-width="0.8"/><path d="M4257.1 1991.1L885.3 835.0" stroke="#9b9b9b" stroke-width="0.8"/><path d="M-261.8 916.6L1184.1 863.3" stroke="#9b9b9b" stroke-width="0.8"/><path d="M4300.9 1992.4L888.3 835.0" stroke="#9b9b9b" stroke-width="0.8"/><path d="M-252.7 914.7L1180.8 862.5" stroke="#9b9b9b" stroke-width="0.8"/><path d="M4344.6 1993.7L891.3 834.9" stroke="#8e8e8e" stroke-width="1.1"/><path d="M-243.8 912.9L1177.6 861.8" stroke="#8e8e8e" stroke-width="1.1"/><path d="M4388.4 1995.0L894.2 834.9" stroke="#9b9b9b" stroke-width="0.8"/><path d="M-235.1 911.1L1174.4 861.1" stroke="#9b9b9b" stroke-width="0.8"/><path d="M4432.1 1996.3L897.2 834.8" stroke="#9b9b9b" stroke-width="0.8"/><path d="M-226.6 909.3L1171.2 860.5" stroke="#9b9b9b" stroke-width="0.8"/><path d="M4475.8 1997.6L900.1 834.8" stroke="#9b9b9b" stroke-width="0.8"/><path d="M-218.2 907.5L1168.1 859.8" stroke="#9b9b9b" stroke-width="0.8"/><path d="M4519.6 1999.0L903.0 834.7" stroke="#9b9b9b" stroke-width="0.8"/><path d="M-210.1 905.8L1164.9 859.1" stroke="#9b9b9b" stroke-width="0.8"/><path d="M4563.3 2000.3L906.0 834.7" stroke="#9b9b9b" stroke-width="0.8"/><path d="M-202.0 904.1L1161.9 858.4" stroke="#9b9b9b" stroke-width="0.8"/><path d="M4607.1 2001.6L908.9 834.6" stroke="#9b9b9b" stroke-width="0.8"/><path d="M-194.2 902.5L1158.8 857.8" stroke="#9b9b9b" stroke-width="0.8"/><path d="M4650.8 2002.9L911.8 834.6" stroke="#9b9b9b" stroke-width="0.8"/><path d="M-186.4 900.9L1155.8 857.1" stroke="#9b9b9b" stroke-width="0.8"/><path d="M4694.6 2004.2L914.7 834.5" stroke="#9b9b9b" stroke-width="0.8"/><path d="M-178.9 899.3L1152.8 856.5" stroke="#9b9b9b" stroke-width="0.8"/><path d="M4738.3 2005.5L917.6 834.5" stroke="#9b9b9b" stroke-width="0.8"/><path d="M-171.4 897.7L1149.9 855.9" stroke="#9b9b9b" stroke-width="0.8"/><path d="M4782.0 2006.9L920.5 834.5" stroke="#8e8e8e" stroke-width="1.1"/><path d="M-164.2 896.2L1147.0 855.2" stroke="#8e8e8e" stroke-width="1.1"/><path d="M4825.8 2008.2L923.3 834.4" stroke="#9b9b9b" stroke-width="0.8"/><path d="M-157.0 894.7L1144.1 854.6" stroke="#9b9b9b" stroke-width="0.8"/><path d="M4869.5 2009.5L926.2 834.4" stroke="#9b9b9b" stroke-width="0.8"/><path d="M-150.0 893.3L1141.2 854.0" stroke="#9b9b9b" stroke-width="0.8"/><path d="M4913.3 2010.8L929.0 834.3" stroke="#9b9b9b" stroke-width="0.8"/><path d="M-143.1 891.8L1138.4 853.4" stroke="#9b9b9b" stroke-width="0.8"/><path d="M4957.0 2012.1L931.9 834.3" stroke="#9b9b9b" stroke-width="0.8"/><path d="M-136.4 890.4L1135.6 852.8" stroke="#9b9b9b" stroke-width="0.8"/><path d="M5000.7 2013.4L934.7 834.2" stroke="#9b9b9b" stroke-width="0.8"/><path d="M-129.7 889.0L1132.9 852.2" stroke="#9b9b9b" stroke-width="0.8"/><path d="M5044.5 2014.7L937.6 834.2" stroke="#9b9b9b" stroke-width="0.8"/><path d="M-123.2 887.7L1130.1 851.6" stroke="#9b9b9b" stroke-width="0.8"/><path d="M5088.2 2016.1L940.4 834.1" stroke="#9b9b9b" stroke-width="0.8"/><path d="M-116.8 886.3L1127.4 851.0" stroke="#9b9b9b" stroke-width="0.8"/><path d="M5132.0 2017.4L943.2 834.1" stroke="#9b9b9b" stroke-width="0.8"/><path d="M-110.5 885.0L1124.7 850.4" stroke="#9b9b9b" stroke-width="0.8"/><path d="M5175.7 2018.7L946.0 834.0" stroke="#9b9b9b" stroke-width="0.8"/><path d="M-104.3 883.7L1122.1 849.8" stroke="#9b9b9b" stroke-width="0.8"/><path d="M5219.5 2020.0L948.8 834.0" stroke="#8e8e8e" stroke-width="1.1"/><path d="M-98.3 882.4L1119.4 849.3" stroke="#8e8e8e" stroke-width="1.1"/><path d="M5263.2 2021.3L951.6 833.9" stroke="#9b9b9b" stroke-width="0.8"/><path d="M-92.3 881.2L1116.8 848.7" stroke="#9b9b9b" stroke-width="0.8"/><path d="M5306.9 2022.6L954.4 833.9" stroke="#9b9b9b" stroke-width="0.8"/><path d="M-86.4 880.0L1114.3 848.2" stroke="#9b9b9b" stroke-width="0.8"/><path d="M5350.7 2023.9L957.1 833.8" stroke="#9b9b9b" stroke-width="0.8"/><path d="M-80.7 878.8L1111.7 847.6" stroke="#9b9b9b" stroke-width="0.8"/><path d="M5394.4 2025.3L959.9 833.8" stroke="#9b9b9b" stroke-width="0.8"/><path d="M-75.0 877.6L1109.2 847.1" stroke="#9b9b9b" stroke-width="0.8"/><path d="M5438.2 2026.6L962.6 833.8" stroke="#9b9b9b" stroke-width="0.8"/><path d="M-69.4 876.4L1106.7 846.5" stroke="#9b9b9b" stroke-width="0.8"/><path d="M5481.9 2027.9L965.4 833.7" stroke="#9b9b9b" stroke-width="0.8"/><path d="M-63.9 875.3L1104.2 846.0" stroke="#9b9b9b" stroke-width="0.8"/><path d="M5525.6 2029.2L968.1 833.7" stroke="#9b9b9b" stroke-width="0.8"/><path d="M-58.5 874.1L1101.8 845.5" stroke="#9b9b9b" stroke-width="0.8"/><path d="M5569.4 2030.5L970.8 833.6" stroke="#9b9b9b" stroke-width="0.8"/><path d="M-53.2 873.0L1099.3 844.9" stroke="#9b9b9b" stroke-width="0.8"/><path d="M5613.1 2031.8L973.6 833.6" stroke="#9b9b9b" stroke-width="0.8"/><path d="M-48.0 871.9L1096.9 844.4" stroke="#9b9b9b" stroke-width="0.8"/><path d="M5656.9 2033.1L976.3 833.5" stroke="#8e8e8e" stroke-width="1.1"/><path d="M-42.8 870.8L1094.5 843.9" stroke="#8e8e8e" stroke-width="1.1"/><path d="M5700.6 2034.5L979.0 833.5" stroke="#9b9b9b" stroke-width="0.8"/><path d="M-37.8 869.8L1092.2 843.4" stroke="#9b9b9b" stroke-width="0.8"/><path d="M5744.3 2035.8L981.7 833.4" stroke="#9b9b9b" stroke-width="0.8"/><path d="M-32.8 868.7L1089.8 842.9" stroke="#9b9b9b" stroke-width="0.8"/><path d="M5788.1 2037.1L984.4 833.4" stroke="#9b9b9b" stroke-width="0.8"/><path d="M-27.9 867.7L1087.5 842.4" stroke="#9b9b9b" stroke-width="0.8"/><path d="M5831.8 2038.4L987.0 833.4" stroke="#9b9b9b" stroke-width="0.8"/><path d="M-23.1 866.7L1085.2 841.9" stroke="#9b9b9b" stroke-width="0.8"/><path d="M5875.6 2039.7L989.7 833.3" stroke="#9b9b9b" stroke-width="0.8"/><path d="M-18.3 865.7L1083.0 841.4" stroke="#9b9b9b" stroke-width="0.8"/><path d="M5919.3 2041.0L992.4 833.3" stroke="#9b9b9b" stroke-width="0.8"/><path d="M-13.6 864.7L1080.7 840.9" stroke="#9b9b9b" stroke-width="0.8"/><path d="M5963.0 2042.3L995.0 833.2" stroke="#9b9b9b" stroke-width="0.8"/><path d="M-9.0 863.8L1078.5 840.4" stroke="#9b9b9b" stroke-width="0.8"/><path d="M6006.8 2043.7L997.7 833.2" stroke="#9b9b9b" stroke-width="0.8"/><path d="M-4.5 862.8L1076.3 839.9" stroke="#9b9b9b" stroke-width="0.8"/><path d="M6050.5 2045.0L1000.3 833.1" stroke="#9b9b9b" stroke-width="0.8"/><path d="M0.0 861.9L1074.1 839.5" stroke="#9b9b9b" stroke-width="0.8"/><path d="M6094.3 2046.3L1003.0 833.1" stroke="#8e8e8e" stroke-width="1.1"/><path d="M4.4 861.0L1071.9 839.0" stroke="#8e8e8e" stroke-width="1.1"/><path d="M6138.0 2047.6L1005.6 833.0" stroke="#9b9b9b" stroke-width="0.8"/><path d="M8.8 860.1L1069.7 838.5" stroke="#9b9b9b" stroke-width="0.8"/><path d="M6181.7 2048.9L1008.2 833.0" stroke="#9b9b9b" stroke-width="0.8"/><path d="M13.0 859.2L1067.6 838.1" stroke="#9b9b9b" stroke-width="0.8"/><path d="M6225.5 2050.2L1010.8 833.0" stroke="#9b9b9b" stroke-width="0.8"/><path d="M17.3 858.3L1065.5 837.6" stroke="#9b9b9b" stroke-width="0.8"/><path d="M6269.2 2051.6L1013.4 832.9" stroke="#9b9b9b" stroke-width="0.8"/><path d="M21.4 857.4L1063.4 837.2" stroke="#9b9b9b" stroke-width="0.8"/><path d="M6312.9 2052.9L1016.0 832.9" stroke="#9b9b9b" stroke-width="0.8"/><path d="M25.5 856.6L1061.3 836.7" stroke="#9b9b9b" stroke-width="0.8"/><path d="M6356.7 2054.2L1018.6 832.8" stroke="#9b9b9b" stroke-width="0.8"/><path d="M29.6 855.7L1059.3 836.3" stroke="#9b9b9b" stroke-width="0.8"/><path d="M6400.4 2055.5L1021.2 832.8" stroke="#9b9b9b" stroke-width="0.8"/><path d="M33.6 854.9L1057.2 835.8" stroke="#9b9b9b" stroke-width="0.8"/><path d="M6444.2 2056.8L1023.8 832.7" stroke="#9b9b9b" stroke-width="0.8"/><path d="M37.5 854.1L1055.2 835.4" stroke="#9b9b9b" stroke-width="0.8"/><path d="M6487.9 2058.1L1026.3 832.7" stroke="#9b9b9b" stroke-width="0.8"/><path d="M41.4 853.2L1053.2 835.0" stroke="#9b9b9b" stroke-width="0.8"/><path d="M6531.6 2059.4L1028.9 832.7" stroke="#8e8e8e" stroke-width="1.1"/><path d="M45.2 852.4L1051.2 834.5" stroke="#8e8e8e" stroke-width="1.1"/><path d="M6575.4 2060.8L1031.4 832.6" stroke="#9b9b9b" stroke-width="0.8"/><path d="M49.0 851.7L1049.3 834.1" stroke="#9b9b9b" stroke-width="0.8"/><path d="M6619.1 2062.1L1034.0 832.6" stroke="#9b9b9b" stroke-width="0.8"/><path d="M52.7 850.9L1047.3 833.7" stroke="#9b9b9b" stroke-width="0.8"/><path d="M6662.9 2063.4L1036.5 832.5" stroke="#9b9b9b" stroke-width="0.8"/><path d="M56.3 850.1L1045.4 833.3" stroke="#9b9b9b" stroke-width="0.8"/><path d="M6706.6 2064.7L1039.1 832.5" stroke="#9b9b9b" stroke-width="0.8"/><path d="M60.0 849.4L1043.5 832.9" stroke="#9b9b9b" stroke-width="0.8"/><path d="M6750.3 2066.0L1041.6 832.4" stroke="#9b9b9b" stroke-width="0.8"/><path d="M63.5 848.6L1041.6 832.4" stroke="#9b9b9b" stroke-width="0.8"/></g><g transform="translate(-553,-837)"><path d="M769.6 1028.0L658.5 838.8" stroke="#3a9a3a" stroke-width="1.5"/><path d="M769.6 1028.0L1549.0 942.1" stroke="#a04a3a" stroke-width="1.5"/><path d="M674.0 967.2 L850.1 922.1 L897.4 957.9 L900.8 964.4 L898.0 1036.2 L696.5 1060.2 L692.3 1050.3 L675.9 991.2 Z" fill="#6c26c8" stroke="#8a48f0" stroke-width="1.2" stroke-linejoin="round"/><path d="M674.0 967.2 L850.1 922.1 L897.4 957.9 L816.2 984.1 L692.3 1016.5 L676.8 982.7 Z" fill="#4e1a90" stroke="none" stroke-width="0" stroke-linejoin="round"/><path d="M675.9 977.1 L692.3 1016.5 L695.1 1058.8 L678.2 1002.4 Z" fill="#3a0c78" stroke="none" stroke-width="0" stroke-linejoin="round"/><path d="M676.1 976.4 L692.2 1016.7 L693.2 1048.9 L677.1 994.5 Z" fill="#2e0e66" stroke="none" stroke-width="0" stroke-linejoin="round"/><path d="M722.7 909.4 L817.1 884.7 L979.7 922.1 L890.9 958.8 Z" fill="none" stroke="#000" stroke-width="1.3" stroke-linejoin="round"/><path d="M726.1 1017.9 L816.2 984.1 L965.0 1036.2 L880.5 1087.5 Z" fill="none" stroke="#000" stroke-width="1.3" stroke-linejoin="round"/><path d="M722.7 909.4 L726.1 1017.9" fill="none" stroke="#111" stroke-width="1.15" stroke-linejoin="round"/><path d="M817.1 884.7 L816.2 984.1" fill="none" stroke="#111" stroke-width="1.15" stroke-linejoin="round"/><path d="M979.7 922.1 L965.0 1036.2" fill="none" stroke="#111" stroke-width="1.15" stroke-linejoin="round"/><path d="M890.9 958.8 L880.5 1087.5" fill="none" stroke="#111" stroke-width="1.15" stroke-linejoin="round"/><path d="M722.7 909.4 L817.1 884.7" fill="none" stroke="#d8d820" stroke-width="1.3" stroke-linejoin="round"/><path d="M772.6 897.3 L937.4 938.2" fill="none" stroke="#000" stroke-width="1.2" stroke-linejoin="round"/><rect x="769.5697379543533" y="894.3316427162581" width="6" height="6" fill="#fff" stroke="#000" stroke-width="1.2"/><path d="M932.4049027895182 938.1882220343759H942.4049027895182M937.4049027895182 932.1882220343759V944.1882220343759" stroke="#000" stroke-width="1.2"/><circle cx="937.4049027895182" cy="938.1882220343759" r="2.5" fill="none" stroke="#000" stroke-width="1"/><path d="M598 1077V1108H628" fill="none" stroke="#6a6a6a" stroke-width="1.2"/><path d="M598 1108L590 1100" stroke="#6a6a6a" stroke-width="1"/><text x="601" y="1081" font-family="Liberation Sans" font-size="14" fill="#6a6a6a">z</text><text x="632" y="1111" font-family="Liberation Sans" font-size="14" fill="#6a6a6a">x</text><text x="588" y="1103" font-family="Liberation Sans" font-size="13" fill="#6a6a6a">y</text></g><rect x="0.5" y="0.5" width="452" height="317" fill="none" stroke="#707070" stroke-width="1"/></svg>
<div class="a" style="left:554px;top:838px;width:108px;height:21px;background:#bccddb;border-radius:0 0 3px 0"></div>
<div class="a t" style="left:564.0px;top:841.3px;font-size:15px;line-height:15px;color:#4a5866;transform:scaleX(0.9315);transform-origin:0 0;">Perspective</div>
<div class="a" style="left:648px;top:841px;width:1.5px;height:16px;background:#222"></div>
<svg class="a" style="left:651px;top:845px;" width="10" height="8" viewBox="0 0 10 8"><path d="M1 1.5H9L5 6.5Z" fill="#222"/></svg>
<div class="a" style="left:11px;top:834px;width:80px;height:666px;background:#d4d4d4;"></div>
<div class="a" style="left:90px;top:834px;width:1px;height:650px;background:#bdbdbd;"></div>
<div class="a" style="left:91px;top:834px;width:1px;height:650px;background:#ececec;"></div>
<div class="a" style="left:14px;top:846px;width:55px;height:1.5px;background:#8a8a8a;"></div>
<div class="a" style="left:14px;top:849.5px;width:55px;height:1.5px;background:#9a9a9a;"></div>
<div class="a" style="left:72px;top:840px;width:16px;height:15px;border:1px solid #8a3a32;border-radius:2px;background:linear-gradient(#dca098,#b85a4c)"></div>
<svg class="a" style="left:75px;top:842.5px;" width="10" height="10" viewBox="0 0 10 10"><path d="M1.5 1.5L8.5 8.5M8.5 1.5L1.5 8.5" stroke="#fff" stroke-width="2.2"/></svg>
<svg class="a" style="left:14px;top:857.8px;" width="30" height="30" viewBox="0 0 30 30"><path d="M9 4V20L13 16L16 22L18 21L15 15H20Z" fill="#fff" stroke="#111" stroke-width="1.2"/></svg>
<svg class="a" style="left:48px;top:857.8px;" width="30" height="30" viewBox="0 0 30 30"><circle cx="15" cy="15" r="3" fill="#fff" stroke="#222" stroke-width="1"/></svg>
<svg class="a" style="left:72px;top:881.8px;" width="7" height="7" viewBox="0 0 7 7"><path d="M7 0 L7 7 L0 7 Z" fill="#fafafa"/></svg>
<svg class="a" style="left:14px;top:893px;" width="30" height="30" viewBox="0 0 30 30"><path d="M5 24L13 8L25 22" fill="none" stroke="#222" stroke-width="1.2"/><circle cx="5" cy="24" r="2" fill="#fff" stroke="#222"/><circle cx="13" cy="8" r="2" fill="#fff" stroke="#222"/><circle cx="25" cy="22" r="2" fill="#fff" stroke="#222"/></svg>
<svg class="a" style="left:38px;top:917px;" width="7" height="7" viewBox="0 0 7 7"><path d="M7 0 L7 7 L0 7 Z" fill="#fafafa"/></svg>
<svg class="a" style="left:48px;top:893px;" width="30" height="30" viewBox="0 0 30 30"><path d="M7 9Q22 6 24 15Q24 24 8 23" fill="none" stroke="#444" stroke-width="1.2"/><rect x="5" y="7" width="4" height="4" fill="#fff" stroke="#111"/><rect x="22" y="5" width="4" height="4" fill="#fff" stroke="#111"/><rect x="5" y="21" width="4" height="4" fill="#fff" stroke="#111"/><rect x="23" y="23" width="4" height="4" fill="#fff" stroke="#111"/></svg>
<svg class="a" style="left:72px;top:917px;" width="7" height="7" viewBox="0 0 7 7"><path d="M7 0 L7 7 L0 7 Z" fill="#fafafa"/></svg>
<svg class="a" style="left:14px;top:926px;" width="30" height="30" viewBox="0 0 30 30"><circle cx="15" cy="15" r="11" fill="none" stroke="#444" stroke-width="1.2"/><path d="M15 15L22 9" stroke="#222" stroke-width="1.4"/><circle cx="22" cy="9" r="2" fill="#fff" stroke="#222"/></svg>
<svg class="a" style="left:38px;top:950px;" width="7" height="7" viewBox="0 0 7 7"><path d="M7 0 L7 7 L0 7 Z" fill="#fafafa"/></svg>
<svg class="a" style="left:48px;top:926px;" width="30" height="30" viewBox="0 0 30 30"><ellipse cx="15" cy="16" rx="12" ry="7" fill="none" stroke="#444" stroke-width="1.2"/><rect x="13" y="7" width="4" height="4" fill="#fff" stroke="#111"/><rect x="13" y="14" width="4" height="4" fill="#fff" stroke="#111"/><rect x="23" y="14" width="4" height="4" fill="#fff" stroke="#111"/></svg>
<svg class="a" style="left:72px;top:950px;" width="7" height="7" viewBox="0 0 7 7"><path d="M7 0 L7 7 L0 7 Z" fill="#fafafa"/></svg>
<svg class="a" style="left:14px;top:960px;" width="30" height="30" viewBox="0 0 30 30"><path d="M6 5Q21 7 24 20L6 26Z" fill="none" stroke="#444" stroke-width="1.2"/><circle cx="6" cy="5" r="2" fill="#fff" stroke="#222"/><circle cx="24" cy="20" r="2" fill="#fff" stroke="#222"/><circle cx="6" cy="26" r="2" fill="#fff" stroke="#222"/></svg>
<svg class="a" style="left:38px;top:984px;" width="7" height="7" viewBox="0 0 7 7"><path d="M7 0 L7 7 L0 7 Z" fill="#fafafa"/></svg>
<svg class="a" style="left:48px;top:960px;" width="30" height="30" viewBox="0 0 30 30"><rect x="5" y="9" width="21" height="13" fill="none" stroke="#333" stroke-width="1.4"/><circle cx="26" cy="9" r="2" fill="#fff" stroke="#222"/><circle cx="5" cy="22" r="2" fill="#fff" stroke="#222"/></svg>
<svg class="a" style="left:72px;top:984px;" width="7" height="7" viewBox="0 0 7 7"><path d="M7 0 L7 7 L0 7 Z" fill="#fafafa"/></svg>
<svg class="a" style="left:14px;top:994px;" width="30" height="30" viewBox="0 0 30 30"><path d="M9 6H21L27 15L21 24H9L3 15Z" fill="none" stroke="#666" stroke-width="1.2"/><path d="M15 15H25" stroke="#222" stroke-width="1.2"/><circle cx="15" cy="15" r="1.8" fill="#fff" stroke="#222"/><circle cx="25" cy="15" r="1.8" fill="#fff" stroke="#222"/></svg>
<svg class="a" style="left:38px;top:1018px;" width="7" height="7" viewBox="0 0 7 7"><path d="M7 0 L7 7 L0 7 Z" fill="#fafafa"/></svg>
<svg class="a" style="left:48px;top:994px;" width="30" height="30" viewBox="0 0 30 30"><path d="M6 6H14Q24 6 25 26" fill="none" stroke="#222" stroke-width="2"/><rect x="4" y="4" width="4" height="4" fill="#fff" stroke="#111"/><rect x="23" y="23" width="4" height="4" fill="#fff" stroke="#111"/></svg>
<svg class="a" style="left:72px;top:1018px;" width="7" height="7" viewBox="0 0 7 7"><path d="M7 0 L7 7 L0 7 Z" fill="#fafafa"/></svg>
<svg class="a" style="left:14px;top:1028px;" width="30" height="30" viewBox="0 0 30 30"><path d="M7 7L24 5L22 22L12 24Z" fill="#6080e8" stroke="#223" stroke-width="1"/><path d="M15 6L17 23M9 15L23 13" stroke="#c8d4ff" stroke-width="1"/><rect x="5" y="5" width="4" height="4" fill="#fff" stroke="#111"/><rect x="22" y="3" width="4" height="4" fill="#fff" stroke="#111"/><rect x="3" y="17" width="4" height="4" fill="#fff" stroke="#111"/><rect x="14" y="23" width="4" height="4" fill="#fff" stroke="#111"/></svg>
<svg class="a" style="left:38px;top:1052px;" width="7" height="7" viewBox="0 0 7 7"><path d="M7 0 L7 7 L0 7 Z" fill="#fafafa"/></svg>
<svg class="a" style="left:48px;top:1028px;" width="30" height="30" viewBox="0 0 30 30"><path d="M4 10L12 5L25 12Q27 20 24 26L20 24Q21 16 15 14Z" fill="#6a88f0" stroke="#222" stroke-width="1"/><path d="M4 10L12 5L16 8L9 12Z" fill="#fff"/></svg>
<svg class="a" style="left:72px;top:1052px;" width="7" height="7" viewBox="0 0 7 7"><path d="M7 0 L7 7 L0 7 Z" fill="#fafafa"/></svg>
<svg class="a" style="left:14px;top:1061px;" width="30" height="30" viewBox="0 0 30 30"><path d="M5 10L15 6L25 10V22L15 26L5 22Z" fill="#5070e0" stroke="#223" stroke-width="1"/><path d="M5 10L15 14L25 10L15 6Z" fill="#98acff"/><path d="M15 14V26" stroke="#223"/></svg>
<svg class="a" style="left:38px;top:1085px;" width="7" height="7" viewBox="0 0 7 7"><path d="M7 0 L7 7 L0 7 Z" fill="#fafafa"/></svg>
<svg class="a" style="left:48px;top:1061px;" width="30" height="30" viewBox="0 0 30 30"><circle cx="19" cy="11" r="8" fill="url(#hs)" stroke="#223"/><circle cx="11" cy="19" r="8" fill="url(#hs)" stroke="#223"/></svg>
<svg class="a" style="left:72px;top:1085px;" width="7" height="7" viewBox="0 0 7 7"><path d="M7 0 L7 7 L0 7 Z" fill="#fafafa"/></svg>
<svg class="a" style="left:14px;top:1095px;" width="30" height="30" viewBox="0 0 30 30"><ellipse cx="15" cy="6" rx="6" ry="2.5" fill="none" stroke="#222" stroke-width="1.2"/><path d="M3 13Q15 18 27 13V25Q15 30 3 25Z" fill="#5a78e8" stroke="#111" stroke-width="1.2"/><ellipse cx="15" cy="21" rx="6" ry="3" fill="none" stroke="#dde4ff" stroke-width="2"/></svg>
<svg class="a" style="left:38px;top:1119px;" width="7" height="7" viewBox="0 0 7 7"><path d="M7 0 L7 7 L0 7 Z" fill="#fafafa"/></svg>
<svg class="a" style="left:48px;top:1095px;" width="30" height="30" viewBox="0 0 30 30"><path d="M4 18L15 8L27 12L16 24Z" fill="#5a78e8" stroke="#223" stroke-width="1"/><path d="M9 13L21 18M13 10L22 20M7 16L19 8" stroke="#b8c8ff" stroke-width="0.8"/></svg>
<svg class="a" style="left:72px;top:1119px;" width="7" height="7" viewBox="0 0 7 7"><path d="M7 0 L7 7 L0 7 Z" fill="#fafafa"/></svg>
<svg class="a" style="left:14px;top:1129px;" width="30" height="30" viewBox="0 0 30 30"><path d="M6 8L10 4L13 7L17 5L16 10L20 12L15 15L14 20L9 16L4 17L7 12Z" fill="#f0b020" stroke="#553" stroke-width="0.8"/><path d="M14 16L19 13L22 17L26 16L25 21L28 25L23 26L20 29L17 25L12 24L15 20Z" fill="#fff" stroke="#333" stroke-width="0.8"/></svg>
<svg class="a" style="left:48px;top:1129px;" width="30" height="30" viewBox="0 0 30 30"><path d="M3 28L6 10L12 18L22 3L17 18L27 12L20 24L28 27Z" fill="#f4a010" stroke="#a60" stroke-width="0.8"/></svg>
<svg class="a" style="left:14px;top:1163px;" width="30" height="30" viewBox="0 0 30 30"><rect x="3" y="14" width="13" height="6" fill="#fff" stroke="#111" stroke-width="1.4"/><path d="M17 4H21L17 14Z" fill="#2030a0"/><path d="M16 18L21 23L26 18L21 13Z" fill="#fff" stroke="#444"/></svg>
<svg class="a" style="left:48px;top:1163px;" width="30" height="30" viewBox="0 0 30 30"><rect x="3" y="14" width="24" height="7" fill="#fff" stroke="#111" stroke-width="1.4"/><path d="M15 4H20L16 21H14Z" fill="#2030a0"/></svg>
<svg class="a" style="left:14px;top:1198px;" width="30" height="30" viewBox="0 0 30 30"><circle cx="15" cy="10" r="5.5" fill="#9aa0ff" stroke="#111" stroke-width="1.6"/><circle cx="10" cy="18" r="5.5" fill="#fff" stroke="#111" stroke-width="1.6"/><circle cx="20" cy="18" r="5.5" fill="#141470" stroke="#111" stroke-width="1.6"/></svg>
<svg class="a" style="left:38px;top:1222px;" width="7" height="7" viewBox="0 0 7 7"><path d="M7 0 L7 7 L0 7 Z" fill="#fafafa"/></svg>
<svg class="a" style="left:48px;top:1198px;" width="30" height="30" viewBox="0 0 30 30"><circle cx="15" cy="9" r="4.5" fill="#9aa0ff" stroke="#777"/><circle cx="9" cy="19" r="4.5" fill="#fff" stroke="#222"/><circle cx="21" cy="19" r="4.5" fill="#14147a" stroke="#222"/></svg>
<svg class="a" style="left:72px;top:1222px;" width="7" height="7" viewBox="0 0 7 7"><path d="M7 0 L7 7 L0 7 Z" fill="#fafafa"/></svg>
<svg class="a" style="left:14px;top:1232px;" width="30" height="30" viewBox="0 0 30 30"><path d="M3 9L7 7Q17 6 21 19" fill="none" stroke="#111" stroke-width="1.6"/><circle cx="9" cy="7" r="2.5" fill="#fff" stroke="#111"/><circle cx="21" cy="20" r="2.5" fill="#fff" stroke="#111"/><path d="M21 22L19 27" stroke="#111" stroke-width="1.5"/></svg>
<svg class="a" style="left:48px;top:1232px;" width="30" height="30" viewBox="0 0 30 30"><path d="M5 9Q20 8 26 25" fill="none" stroke="#111" stroke-width="2.2"/><path d="M4 5H10M10 5Q22 7 27 21" fill="none" stroke="#222" stroke-width="0.8" stroke-dasharray="2 1.5"/><rect x="13" y="2" width="4" height="4" fill="#fff" stroke="#111"/><rect x="24" y="15" width="4" height="4" fill="#fff" stroke="#111"/></svg>
<svg class="a" style="left:72px;top:1256px;" width="7" height="7" viewBox="0 0 7 7"><path d="M7 0 L7 7 L0 7 Z" fill="#fafafa"/></svg>
<svg class="a" style="left:14px;top:1266px;" width="30" height="30" viewBox="0 0 30 30"><path d="M4 4H25V12L22 9H18V24L21 26H10L13 24V9H9L6 12V4Z" fill="#6a88f0" stroke="#112" stroke-width="1.1"/><path d="M13 9V24" stroke="#c8d4ff" stroke-width="1"/></svg>
<svg class="a" style="left:48px;top:1266px;" width="30" height="30" viewBox="0 0 30 30"><rect x="5" y="19" width="7" height="7" fill="#eee" stroke="#111"/><rect x="19" y="5" width="7" height="7" fill="#5a78e8" stroke="#111"/><path d="M12 19L19 12" stroke="#111" stroke-width="1.2"/></svg>
<svg class="a" style="left:72px;top:1290px;" width="7" height="7" viewBox="0 0 7 7"><path d="M7 0 L7 7 L0 7 Z" fill="#fafafa"/></svg>
<svg class="a" style="left:14px;top:1300px;" width="30" height="30" viewBox="0 0 30 30"><rect x="4" y="4" width="7" height="7" fill="#8aa0ff" stroke="#111"/><rect x="17" y="8" width="7" height="7" fill="#8aa0ff" stroke="#111"/><rect x="4" y="18" width="7" height="7" fill="#fff" stroke="#111"/><rect x="17" y="20" width="7" height="7" fill="#8aa0ff" stroke="#111"/><rect x="13" y="13" width="6" height="6" fill="#8aa0ff" stroke="#111"/></svg>
<svg class="a" style="left:48px;top:1300px;" width="30" height="30" viewBox="0 0 30 30"><rect x="4" y="5" width="6" height="16" fill="#fff" stroke="#111"/><path d="M16 24L26 14L28 17L18 27Z" fill="#6a88f0" stroke="#111"/><path d="M11 8Q20 6 22 12" fill="none" stroke="#111"/></svg>
<svg class="a" style="left:14px;top:1334px;" width="30" height="30" viewBox="0 0 30 30"><path d="M4 9L15 4L27 9V21L15 26L4 21Z" fill="#5a78e8" stroke="#112" stroke-width="1.2"/><path d="M4 9L15 13L27 9L15 4Z" fill="#a8b8ff"/><rect x="11" y="16" width="7" height="8" fill="#fff" stroke="#222"/></svg>
<svg class="a" style="left:38px;top:1358px;" width="7" height="7" viewBox="0 0 7 7"><path d="M7 0 L7 7 L0 7 Z" fill="#fafafa"/></svg>
<svg class="a" style="left:48px;top:1334px;" width="30" height="30" viewBox="0 0 30 30"><path d="M3 24L8 19H28L23 24Z" fill="#6a88f0" stroke="#222"/><path d="M9 21V7M16 21V7M23 21V7" stroke="#fff" stroke-width="1.6"/><path d="M7 9L9 5L11 9M14 9L16 5L18 9M21 9L23 5L25 9" fill="#fff"/></svg>
<svg class="a" style="left:72px;top:1358px;" width="7" height="7" viewBox="0 0 7 7"><path d="M7 0 L7 7 L0 7 Z" fill="#fafafa"/></svg>
<div class="a" style="left:17px;top:1370.0px;width:6px;height:6px;background:#6a7ae8;border:1.2px solid #111"></div>
<div class="a" style="left:26px;top:1370.0px;width:6px;height:6px;background:#2a3ac0;border:1.2px solid #111"></div>
<div class="a" style="left:35px;top:1370.0px;width:6px;height:6px;background:#6a7ae8;border:1.2px solid #111"></div>
<div class="a" style="left:17px;top:1378.5px;width:6px;height:6px;background:#2a3ac0;border:1.2px solid #111"></div>
<div class="a" style="left:26px;top:1378.5px;width:6px;height:6px;background:#6a7ae8;border:1.2px solid #111"></div>
<div class="a" style="left:35px;top:1378.5px;width:6px;height:6px;background:#2a3ac0;border:1.2px solid #111"></div>
<div class="a" style="left:17px;top:1387.0px;width:6px;height:6px;background:#fff;border:1.2px solid #111"></div>
<div class="a" style="left:26px;top:1387.0px;width:6px;height:6px;background:#2a3ac0;border:1.2px solid #111"></div>
<div class="a" style="left:35px;top:1387.0px;width:6px;height:6px;background:#6a7ae8;border:1.2px solid #111"></div>
<svg class="a" style="left:48px;top:1367px;" width="30" height="30" viewBox="0 0 30 30"><rect x="9" y="4" width="12" height="8" fill="#fff" stroke="#111" stroke-width="1.2"/><rect x="10" y="12" width="10" height="6" fill="#fff" stroke="#111"/><rect x="9" y="18" width="12" height="8" fill="#fff" stroke="#111" stroke-width="1.2"/><path d="M15 2V28" stroke="#c42" stroke-width="1.5"/></svg>
<svg class="a" style="left:72px;top:1391px;" width="7" height="7" viewBox="0 0 7 7"><path d="M7 0 L7 7 L0 7 Z" fill="#fafafa"/></svg>
<svg class="a" style="left:14px;top:1399px;" width="30" height="30" viewBox="0 0 30 30"><path d="M3 8L10 5V24L4 22Z" fill="#f4f4f4" stroke="#222"/><path d="M10 25L16 4L24 7L18 26Z" fill="#5a78e8" stroke="#222"/></svg>
<svg class="a" style="left:38px;top:1423px;" width="7" height="7" viewBox="0 0 7 7"><path d="M7 0 L7 7 L0 7 Z" fill="#fafafa"/></svg>
<svg class="a" style="left:48px;top:1399px;" width="30" height="30" viewBox="0 0 30 30"><path d="M4 16L10 23L26 5L10 27Z" fill="#111"/></svg>
<svg class="a" style="left:72px;top:1423px;" width="7" height="7" viewBox="0 0 7 7"><path d="M7 0 L7 7 L0 7 Z" fill="#fafafa"/></svg>
<svg class="a" style="left:14px;top:1433px;" width="30" height="30" viewBox="0 0 30 30"><path d="M3 12L10 7L17 10V21L10 25L3 21Z" fill="#e0e0e0" stroke="#222"/><path d="M20 6L28 22Q22 26 14 22Z" fill="#ccc" stroke="#222"/></svg>
<svg class="a" style="left:38px;top:1457px;" width="7" height="7" viewBox="0 0 7 7"><path d="M7 0 L7 7 L0 7 Z" fill="#fafafa"/></svg>
<svg class="a" style="left:48px;top:1433px;" width="30" height="30" viewBox="0 0 30 30"><path d="M3 22L15 10L27 22L15 27Z" fill="#f0b030" stroke="#222"/><path d="M15 10V27" stroke="#a66"/><path d="M12 7L20 3L26 4V8H18Z" fill="#bbb" stroke="#222"/></svg>
<svg class="a" style="left:72px;top:1457px;" width="7" height="7" viewBox="0 0 7 7"><path d="M7 0 L7 7 L0 7 Z" fill="#fafafa"/></svg>
<div class="a" style="left:1006px;top:834px;width:227px;height:660px;background:#d4d4d4;"></div>
<div class="a" style="left:1012px;top:838px;width:1px;height:660px;background:#b8b8b8;"></div>
<div class="a" style="left:1013px;top:838px;width:1px;height:660px;background:#ececec;"></div>
<div class="a" style="left:1017px;top:846px;width:195px;height:1.5px;background:#8a8a8a;"></div>
<div class="a" style="left:1017px;top:849.5px;width:195px;height:1.5px;background:#9a9a9a;"></div>
<div class="a" style="left:1215px;top:840px;width:16px;height:15px;border:1px solid #8a3a32;border-radius:2px;background:linear-gradient(#dca098,#b85a4c)"></div>
<svg class="a" style="left:1218px;top:842.5px;" width="10" height="10" viewBox="0 0 10 10"><path d="M1.5 1.5L8.5 8.5M8.5 1.5L1.5 8.5" stroke="#fff" stroke-width="2.2"/></svg>
<svg class="a" style="left:1019px;top:860px;" width="95" height="28" viewBox="0 0 95 28"><path d="M1 28V6Q1 1 6 1H68Q72 1 75 4L93 27" fill="#eeeeee" stroke="#b0b0b0" stroke-width="1"/></svg>
<svg class="a" style="left:1027px;top:863px;" width="20" height="20" viewBox="0 0 20 20"><path d="M2 5L9 2L18 6L15 16L7 19L3 14Z" fill="#f4f4f4" stroke="#334" stroke-width="1.2"/><path d="M2 5L9 2L18 6L15 12L4 10Z" fill="#f04818"/><path d="M4 12L8 16L15 13" fill="none" stroke="#2a3aa8" stroke-width="2"/></svg>
<div class="a t" style="left:1046.5px;top:867.9px;font-size:14px;line-height:14px;color:#2a2a2a;transform:scaleX(0.9519);transform-origin:0 0;">Layers</div>
<div class="a" style="left:1020px;top:886px;width:208px;height:606px;background:#f0f0f0;border:1px solid #b4b4b4;border-top:none"></div>
<div class="a" style="left:1110px;top:886px;width:118px;height:1px;background:#b4b4b4;"></div>
<svg class="a" style="left:1026px;top:892px;" width="15" height="16" viewBox="0 0 15 16"><path d="M3 1H9L13 5V15H3Z" fill="#fff" stroke="#111" stroke-width="1.3"/></svg>
<svg class="a" style="left:1051px;top:892px;" width="15" height="16" viewBox="0 0 15 16"><path d="M2 1H8L10 3V10H2Z" fill="#fff" stroke="#111" stroke-width="1.2"/><path d="M6 5H11L13 7V15H6Z" fill="#fff" stroke="#111" stroke-width="1.2"/></svg>
<svg class="a" style="left:1077px;top:893px;" width="14" height="14" viewBox="0 0 14 14"><path d="M2 2L12 12M12 2L2 12" stroke="#999" stroke-width="1.4"/></svg>
<svg class="a" style="left:1102px;top:894px;" width="14" height="12" viewBox="0 0 14 12"><path d="M1 10H13L7 3Z" fill="#111"/></svg>
<svg class="a" style="left:1127px;top:894px;" width="14" height="12" viewBox="0 0 14 12"><path d="M1 3H13L7 10Z" fill="#111"/></svg>
<svg class="a" style="left:1153px;top:893px;" width="12" height="14" viewBox="0 0 12 14"><path d="M9 1V13L3 7Z" fill="#aaa"/></svg>
<svg class="a" style="left:1178px;top:892px;" width="16" height="16" viewBox="0 0 16 16"><path d="M1 2H15L10 8V14L6 12V8Z" fill="#fff" stroke="#111" stroke-width="1.3"/></svg>
<svg class="a" style="left:1203px;top:892px;" width="17" height="16" viewBox="0 0 17 16"><path d="M2 14L10 6" stroke="#111" stroke-width="2"/><path d="M7 3L11 1L16 6L13 9Z" fill="#ddd" stroke="#111" stroke-width="1.1"/></svg>
<div class="a" style="left:1021px;top:916px;width:206px;height:576px;background:#fff;border:1px solid #a8a8a8;border-bottom:none"></div>
<div class="a" style="left:1022px;top:917px;width:203px;height:28px;background:linear-gradient(#fafafa,#ececec);"></div>
<div class="a" style="left:1022px;top:944px;width:203px;height:1px;background:#dadada;"></div>
<div class="a" style="left:1119.3px;top:918px;width:1px;height:26px;background:#e2e2e2;"></div>
<div class="a" style="left:1140.3px;top:918px;width:1px;height:26px;background:#e2e2e2;"></div>
<div class="a" style="left:1161.3px;top:918px;width:1px;height:26px;background:#e2e2e2;"></div>
<div class="a" style="left:1181.6px;top:918px;width:1px;height:26px;background:#e2e2e2;"></div>
<div class="a" style="left:1202.6px;top:918px;width:1px;height:26px;background:#e2e2e2;"></div>
<div class="a t" style="left:1031.5px;top:925.8px;font-size:14px;line-height:14px;color:#222;transform:scaleX(0.8836);transform-origin:0 0;">Name</div>
<div class="a" style="left:1022px;top:945px;width:203px;height:22px;background:#efefef;"></div>
<div class="a" style="left:1023px;top:989px;width:202px;height:19.5px;background:#3a95ee;border-bottom:1px dotted #1a4a90"></div>
<div class="a" style="left:1022px;top:988px;width:203px;height:0;border-top:1px dotted #d8d8d8"></div>
<div class="a" style="left:1022px;top:1029px;width:203px;height:0;border-top:1px dotted #d8d8d8"></div>
<div class="a" style="left:1022px;top:1050px;width:203px;height:0;border-top:1px dotted #d8d8d8"></div>
<div class="a t" style="left:1035.0px;top:950.8px;font-size:14px;line-height:14px;color:#111;font-weight:bold;transform:scaleX(1.0327);transform-origin:0 0;">Default</div>
<svg class="a" style="left:1122px;top:951px;" width="15" height="13" viewBox="0 0 15 13"><path d="M1.5 7L5 11.5L13.5 2" fill="none" stroke="#111" stroke-width="2.4"/></svg>
<div class="a" style="left:1185px;top:950px;width:14px;height:14px;background:#000;border:1px solid #222"></div>
<svg class="a" style="left:1205px;top:949px;" width="17" height="17" viewBox="0 0 17 17"><circle cx="8.5" cy="8.5" r="7" fill="#fafafa" stroke="#eee"/></svg>
<div class="a t" style="left:1034.0px;top:971.2px;font-size:14px;line-height:14px;color:#111;transform:scaleX(0.9018);transform-origin:0 0;">Wire 01</div>
<svg class="a" style="left:1143px;top:968.1px;" width="14" height="18" viewBox="0 0 14 18"><path d="M7 1Q12 1 12 6Q12 9 9 12V15H5V12Q2 9 2 6Q2 1 7 1Z" fill="#4a90d0" stroke="#335" stroke-width="0.8"/><rect x="5" y="15" width="4" height="2" fill="#555"/></svg>
<svg class="a" style="left:1163px;top:968.1px;" width="17" height="18" viewBox="0 0 17 18"><rect x="2" y="8" width="9" height="8" fill="#fff" stroke="#111" stroke-width="1.3"/><path d="M8 8V5Q8 2 11 2Q14 2 14 5V7" fill="none" stroke="#111" stroke-width="1.3"/></svg>
<div class="a" style="left:1185px;top:970.1px;width:14px;height:14px;background:#e00000;border:1px solid #333"></div>
<svg class="a" style="left:1205px;top:968.6px;" width="17" height="17" viewBox="0 0 17 17"><circle cx="8.5" cy="8.5" r="7" fill="#fcfcfc" stroke="#eee"/></svg>
<div class="a t" style="left:1034.0px;top:991.7px;font-size:14px;line-height:14px;color:#e8f2ff;transform:scaleX(0.9122);transform-origin:0 0;">Wire 02</div>
<svg class="a" style="left:1143px;top:988.6px;" width="14" height="18" viewBox="0 0 14 18"><path d="M7 1Q12 1 12 6Q12 9 9 12V15H5V12Q2 9 2 6Q2 1 7 1Z" fill="#f0f090" stroke="#335" stroke-width="0.8"/><rect x="5" y="15" width="4" height="2" fill="#555"/></svg>
<svg class="a" style="left:1163px;top:988.6px;" width="17" height="18" viewBox="0 0 17 18"><rect x="2" y="8" width="9" height="8" fill="#fff" stroke="#111" stroke-width="1.3"/><path d="M8 8V5Q8 2 11 2Q14 2 14 5V7" fill="none" stroke="#fff" stroke-width="1.3"/></svg>
<div class="a" style="left:1185px;top:990.6px;width:14px;height:14px;background:#7a2ad8;border:1px solid #333"></div>
<svg class="a" style="left:1205px;top:989.1px;" width="17" height="17" viewBox="0 0 17 17"><circle cx="8.5" cy="8.5" r="7" fill="#fff" stroke="#fff"/></svg>
<div class="a t" style="left:1034.0px;top:1012.3px;font-size:14px;line-height:14px;color:#111;transform:scaleX(0.9018);transform-origin:0 0;">Wire 03</div>
<svg class="a" style="left:1143px;top:1009.2px;" width="14" height="18" viewBox="0 0 14 18"><path d="M7 1Q12 1 12 6Q12 9 9 12V15H5V12Q2 9 2 6Q2 1 7 1Z" fill="#4a90d0" stroke="#335" stroke-width="0.8"/><rect x="5" y="15" width="4" height="2" fill="#555"/></svg>
<svg class="a" style="left:1163px;top:1009.2px;" width="17" height="18" viewBox="0 0 17 18"><rect x="2" y="8" width="9" height="8" fill="#fff" stroke="#111" stroke-width="1.3"/><path d="M8 8V5Q8 2 11 2Q14 2 14 5V7" fill="none" stroke="#111" stroke-width="1.3"/></svg>
<div class="a" style="left:1185px;top:1011.2px;width:14px;height:14px;background:#0000e0;border:1px solid #333"></div>
<svg class="a" style="left:1205px;top:1009.7px;" width="17" height="17" viewBox="0 0 17 17"><circle cx="8.5" cy="8.5" r="7" fill="#fcfcfc" stroke="#eee"/></svg>
<div class="a t" style="left:1034.0px;top:1032.9px;font-size:14px;line-height:14px;color:#111;transform:scaleX(0.9018);transform-origin:0 0;">Wire 04</div>
<svg class="a" style="left:1143px;top:1029.8px;" width="14" height="18" viewBox="0 0 14 18"><path d="M7 1Q12 1 12 6Q12 9 9 12V15H5V12Q2 9 2 6Q2 1 7 1Z" fill="#4a90d0" stroke="#335" stroke-width="0.8"/><rect x="5" y="15" width="4" height="2" fill="#555"/></svg>
<svg class="a" style="left:1163px;top:1029.8px;" width="17" height="18" viewBox="0 0 17 18"><rect x="2" y="8" width="9" height="8" fill="#fff" stroke="#111" stroke-width="1.3"/><path d="M8 8V5Q8 2 11 2Q14 2 14 5V7" fill="none" stroke="#111" stroke-width="1.3"/></svg>
<div class="a" style="left:1185px;top:1031.8px;width:14px;height:14px;background:#007a10;border:1px solid #333"></div>
<svg class="a" style="left:1205px;top:1030.3px;" width="17" height="17" viewBox="0 0 17 17"><circle cx="8.5" cy="8.5" r="7" fill="#fcfcfc" stroke="#eee"/></svg>
<div class="a" style="left:1020px;top:1491px;width:208px;height:3px;background:#a0a0a0;"></div>
<div class="a" style="left:91px;top:1478px;width:922px;height:26px;background:#d4d4d4;"></div>
<div class="a" style="left:96px;top:1478px;width:910px;height:1px;background:#9a9a9a;"></div>
<svg class="a" style="left:96px;top:1478px;" width="103" height="23" viewBox="0 0 103 23"><path d="M0.5 0V14L8 22H93 Q97 22 97 18 V0" fill="#e2e2e2" stroke="#a8a8a8" stroke-width="1"/></svg>
<svg class="a" style="left:290px;top:1478px;" width="66" height="23" viewBox="0 0 66 23"><path d="M0.5 0V14L8 22H56 Q60 22 60 18 V0" fill="#dedede" stroke="#a8a8a8" stroke-width="1"/></svg>
<svg class="a" style="left:237px;top:1478px;" width="65" height="23" viewBox="0 0 65 23"><path d="M0.5 0V14L8 22H55 Q59 22 59 18 V0" fill="#dedede" stroke="#a8a8a8" stroke-width="1"/></svg>
<svg class="a" style="left:345px;top:1478px;" width="41" height="23" viewBox="0 0 41 23"><path d="M0.5 0V14L8 22H31 Q35 22 35 18 V0" fill="#dedede" stroke="#a8a8a8" stroke-width="1"/></svg>
<svg class="a" style="left:183px;top:1478px;" width="64" height="23" viewBox="0 0 64 23"><path d="M0.5 0V14L8 22H54 Q58 22 58 18 V0" fill="#b8b8b8" stroke="#909090" stroke-width="1"/></svg>
<div class="a t" style="left:108.0px;top:1482.8px;font-size:15px;line-height:15px;color:#555;transform:scaleX(0.9264);transform-origin:0 0;">Perspective</div>
<div class="a t" style="left:204.0px;top:1482.8px;font-size:15px;line-height:15px;color:#222;transform:scaleX(0.9510);transform-origin:0 0;">Top</div>
<div class="a t" style="left:250.8px;top:1482.8px;font-size:15px;line-height:15px;color:#666;transform:scaleX(0.9226);transform-origin:0 0;">Front</div>
<div class="a t" style="left:306.2px;top:1482.8px;font-size:15px;line-height:15px;color:#666;transform:scaleX(0.9452);transform-origin:0 0;">Right</div>
<svg class="a" style="left:362px;top:1483px;" width="15" height="15" viewBox="0 0 15 15"><path d="M5.5 1.5H9.5V5.5H13.5V9.5H9.5V13.5H5.5V9.5H1.5V5.5H5.5Z" fill="none" stroke="#888" stroke-width="1.1"/></svg>
<div class="a" style="left:1006px;top:1494px;width:236px;height:10px;background:#d6d6d6;"></div>
<div class="a" style="left:11px;top:1504px;width:1231px;height:1px;background:#b4b4b4;"></div>
<div class="a" style="left:11px;top:1505px;width:1231px;height:1px;background:#e6e6e6;"></div>
<div class="a" style="left:11px;top:1506px;width:1231px;height:30px;background:linear-gradient(90deg,#d4d4d4 0,#d4d4d4 85%,#d8dcd6 100%);"></div>
<div class="a" style="left:14px;top:1509px;width:2px;height:24px;background:#a0a0a0;"></div>
<div class="a" style="left:17px;top:1509px;width:1px;height:24px;background:#c4c4c4;"></div>
<div class="a" style="left:25px;top:1513px;width:15px;height:15px;border:1px solid #8e8f8f;background:linear-gradient(135deg,#dcdcdc,#fafafa)"></div>
<svg class="a" style="left:27px;top:1515px;" width="11" height="11" viewBox="0 0 11 11"><path d="M2 6L4.5 9L9 1.5" fill="none" stroke="#3a4aa8" stroke-width="1.8"/></svg>
<div class="a t" style="left:47.0px;top:1514.3px;font-size:14px;line-height:14px;color:#303030;transform:scaleX(0.9072);transform-origin:0 0;">End</div>
<div class="a" style="left:93px;top:1513px;width:15px;height:15px;border:1px solid #8e8f8f;background:linear-gradient(135deg,#dcdcdc,#fafafa)"></div>
<div class="a t" style="left:115.0px;top:1514.3px;font-size:14px;line-height:14px;color:#303030;transform:scaleX(0.8963);transform-origin:0 0;">Near</div>
<div class="a" style="left:161px;top:1513px;width:15px;height:15px;border:1px solid #8e8f8f;background:linear-gradient(135deg,#dcdcdc,#fafafa)"></div>
<div class="a t" style="left:182.0px;top:1514.3px;font-size:14px;line-height:14px;color:#303030;transform:scaleX(0.9088);transform-origin:0 0;">Point</div>
<div class="a" style="left:229px;top:1513px;width:15px;height:15px;border:1px solid #8e8f8f;background:linear-gradient(135deg,#dcdcdc,#fafafa)"></div>
<svg class="a" style="left:231px;top:1515px;" width="11" height="11" viewBox="0 0 11 11"><path d="M2 6L4.5 9L9 1.5" fill="none" stroke="#3a4aa8" stroke-width="1.8"/></svg>
<div class="a t" style="left:250.0px;top:1514.3px;font-size:14px;line-height:14px;color:#303030;transform:scaleX(0.9309);transform-origin:0 0;">Mid</div>
<div class="a" style="left:297px;top:1513px;width:15px;height:15px;border:1px solid #8e8f8f;background:linear-gradient(135deg,#dcdcdc,#fafafa)"></div>
<svg class="a" style="left:299px;top:1515px;" width="11" height="11" viewBox="0 0 11 11"><path d="M2 6L4.5 9L9 1.5" fill="none" stroke="#3a4aa8" stroke-width="1.8"/></svg>
<div class="a t" style="left:318.0px;top:1514.3px;font-size:14px;line-height:14px;color:#303030;transform:scaleX(0.9345);transform-origin:0 0;">Cen</div>
<div class="a" style="left:365px;top:1513px;width:15px;height:15px;border:1px solid #8e8f8f;background:linear-gradient(135deg,#dcdcdc,#fafafa)"></div>
<div class="a t" style="left:386.0px;top:1514.3px;font-size:14px;line-height:14px;color:#303030;transform:scaleX(0.8994);transform-origin:0 0;">Int</div>
<div class="a" style="left:432px;top:1513px;width:15px;height:15px;border:1px solid #8e8f8f;background:linear-gradient(135deg,#dcdcdc,#fafafa)"></div>
<svg class="a" style="left:434px;top:1515px;" width="11" height="11" viewBox="0 0 11 11"><path d="M2 6L4.5 9L9 1.5" fill="none" stroke="#3a4aa8" stroke-width="1.8"/></svg>
<div class="a t" style="left:454.0px;top:1514.3px;font-size:14px;line-height:14px;color:#303030;transform:scaleX(0.8792);transform-origin:0 0;">Perp</div>
<div class="a" style="left:501px;top:1513px;width:15px;height:15px;border:1px solid #8e8f8f;background:linear-gradient(135deg,#dcdcdc,#fafafa)"></div>
<div class="a t" style="left:522.0px;top:1514.3px;font-size:14px;line-height:14px;color:#303030;transform:scaleX(1.0189);transform-origin:0 0;">Tan</div>
<div class="a" style="left:568.4px;top:1513px;width:15px;height:15px;border:1px solid #8e8f8f;background:linear-gradient(135deg,#dcdcdc,#fafafa)"></div>
<svg class="a" style="left:570.4px;top:1515px;" width="11" height="11" viewBox="0 0 11 11"><path d="M2 6L4.5 9L9 1.5" fill="none" stroke="#3a4aa8" stroke-width="1.8"/></svg>
<div class="a t" style="left:590.0px;top:1514.3px;font-size:14px;line-height:14px;color:#303030;transform:scaleX(0.9139);transform-origin:0 0;">Quad</div>
<div class="a" style="left:636px;top:1513px;width:15px;height:15px;border:1px solid #8e8f8f;background:linear-gradient(135deg,#dcdcdc,#fafafa)"></div>
<div class="a t" style="left:657.0px;top:1514.3px;font-size:14px;line-height:14px;color:#303030;transform:scaleX(0.9375);transform-origin:0 0;">Knot</div>
<div class="a" style="left:704px;top:1513px;width:15px;height:15px;border:1px solid #8e8f8f;background:linear-gradient(135deg,#dcdcdc,#fafafa)"></div>
<div class="a t" style="left:725.0px;top:1514.3px;font-size:14px;line-height:14px;color:#303030;transform:scaleX(0.9322);transform-origin:0 0;">Vertex</div>
<div class="a" style="left:771px;top:1511px;width:17px;height:18px;border:1px solid #8a8a8a;border-radius:4px;background:linear-gradient(#fdfdfd,#e4e4e4)"></div>
<div class="a t" style="left:793.0px;top:1514.3px;font-size:14px;line-height:14px;color:#303030;transform:scaleX(0.9180);transform-origin:0 0;">Project</div>
<div class="a" style="left:839px;top:1511px;width:17px;height:18px;border:1px solid #8a8a8a;border-radius:4px;background:linear-gradient(#fdfdfd,#e4e4e4)"></div>
<div class="a t" style="left:861.0px;top:1514.3px;font-size:14px;line-height:14px;color:#303030;transform:scaleX(0.9209);transform-origin:0 0;">Disable</div>
<div class="a" style="left:11px;top:1536px;width:1231px;height:1px;background:#8e8e8e;"></div>
<div class="a" style="left:11px;top:1537px;width:1231px;height:23px;background:#d4d4d4;"></div>
<div class="a" style="left:70.2px;top:1537px;width:1px;height:23px;background:#9a9a9a;"></div>
<div class="a" style="left:165.3px;top:1537px;width:1px;height:23px;background:#9a9a9a;"></div>
<div class="a" style="left:258.4px;top:1537px;width:1px;height:23px;background:#9a9a9a;"></div>
<div class="a" style="left:350.8px;top:1537px;width:1px;height:23px;background:#9a9a9a;"></div>
<div class="a" style="left:444.9px;top:1537px;width:1px;height:23px;background:#9a9a9a;"></div>
<div class="a" style="left:628px;top:1537px;width:1px;height:23px;background:#9a9a9a;"></div>
<div class="a" style="left:709.9px;top:1537px;width:1px;height:23px;background:#9a9a9a;"></div>
<div class="a" style="left:759px;top:1537px;width:1px;height:23px;background:#9a9a9a;"></div>
<div class="a" style="left:817.4px;top:1537px;width:1px;height:23px;background:#9a9a9a;"></div>
<div class="a" style="left:874.8px;top:1537px;width:1px;height:23px;background:#9a9a9a;"></div>
<div class="a" style="left:964px;top:1537px;width:1px;height:23px;background:#9a9a9a;"></div>
<div class="a" style="left:1036.4px;top:1537px;width:1px;height:23px;background:#9a9a9a;"></div>
<div class="a" style="left:1150.6px;top:1537px;width:1px;height:23px;background:#9a9a9a;"></div>
<div class="a" style="left:760px;top:1538px;width:57px;height:21px;background:#eaf2fa;"></div>
<div class="a" style="left:818px;top:1538px;width:56px;height:21px;background:#eaf2fa;"></div>
<div class="a" style="left:875.8px;top:1538px;width:88px;height:21px;background:#eaf2fa;"></div>
<div class="a t" style="left:16.5px;top:1541.9px;font-size:14.5px;line-height:14.5px;color:#202020;transform:scaleX(1.0198);transform-origin:0 0;">CPlane</div>
<div class="a t" style="left:94.0px;top:1541.9px;font-size:14.5px;line-height:14.5px;color:#202020;transform:scaleX(1.0134);transform-origin:0 0;">x 9.749</div>
<div class="a t" style="left:179.8px;top:1541.9px;font-size:14.5px;line-height:14.5px;color:#202020;transform:scaleX(1.0272);transform-origin:0 0;">y -12.758</div>
<div class="a t" style="left:276.5px;top:1541.9px;font-size:14.5px;line-height:14.5px;color:#202020;transform:scaleX(1.0103);transform-origin:0 0;">z 12.410</div>
<div class="a t" style="left:360.7px;top:1541.9px;font-size:14.5px;line-height:14.5px;color:#202020;transform:scaleX(1.0464);transform-origin:0 0;">17.783 mm</div>
<div class="a t" style="left:469.7px;top:1541.9px;font-size:14.5px;line-height:14.5px;color:#202020;transform:scaleX(1.0078);transform-origin:0 0;">Default</div>
<div class="a t" style="left:635.2px;top:1541.9px;font-size:14.5px;line-height:14.5px;color:#202020;transform:scaleX(1.0155);transform-origin:0 0;">Grid Snap</div>
<div class="a t" style="left:716.0px;top:1541.9px;font-size:14.5px;line-height:14.5px;color:#202020;transform:scaleX(0.9541);transform-origin:0 0;">Ortho</div>
<div class="a t" style="left:764.5px;top:1541.9px;font-size:14.5px;line-height:14.5px;color:#202020;font-weight:bold;transform:scaleX(1.0039);transform-origin:0 0;">Planar</div>
<div class="a t" style="left:823.0px;top:1541.9px;font-size:14.5px;line-height:14.5px;color:#202020;font-weight:bold;transform:scaleX(0.9862);transform-origin:0 0;">Osnap</div>
<div class="a t" style="left:878.7px;top:1541.9px;font-size:14.5px;line-height:14.5px;color:#202020;font-weight:bold;transform:scaleX(1.0229);transform-origin:0 0;">SmartTrack</div>
<div class="a t" style="left:972.3px;top:1541.9px;font-size:14.5px;line-height:14.5px;color:#202020;transform:scaleX(1.0316);transform-origin:0 0;">Gumball</div>
<div class="a t" style="left:1044.0px;top:1541.9px;font-size:14.5px;line-height:14.5px;color:#202020;transform:scaleX(1.0241);transform-origin:0 0;">Record History</div>
<div class="a t" style="left:1159.0px;top:1541.9px;font-size:14.5px;line-height:14.5px;color:#202020;transform:scaleX(1.0220);transform-origin:0 0;">Record History</div>
<div class="a" style="left:448.2px;top:1541px;width:17.5px;height:16.5px;background:#000;"></div></div>
</body></html>
